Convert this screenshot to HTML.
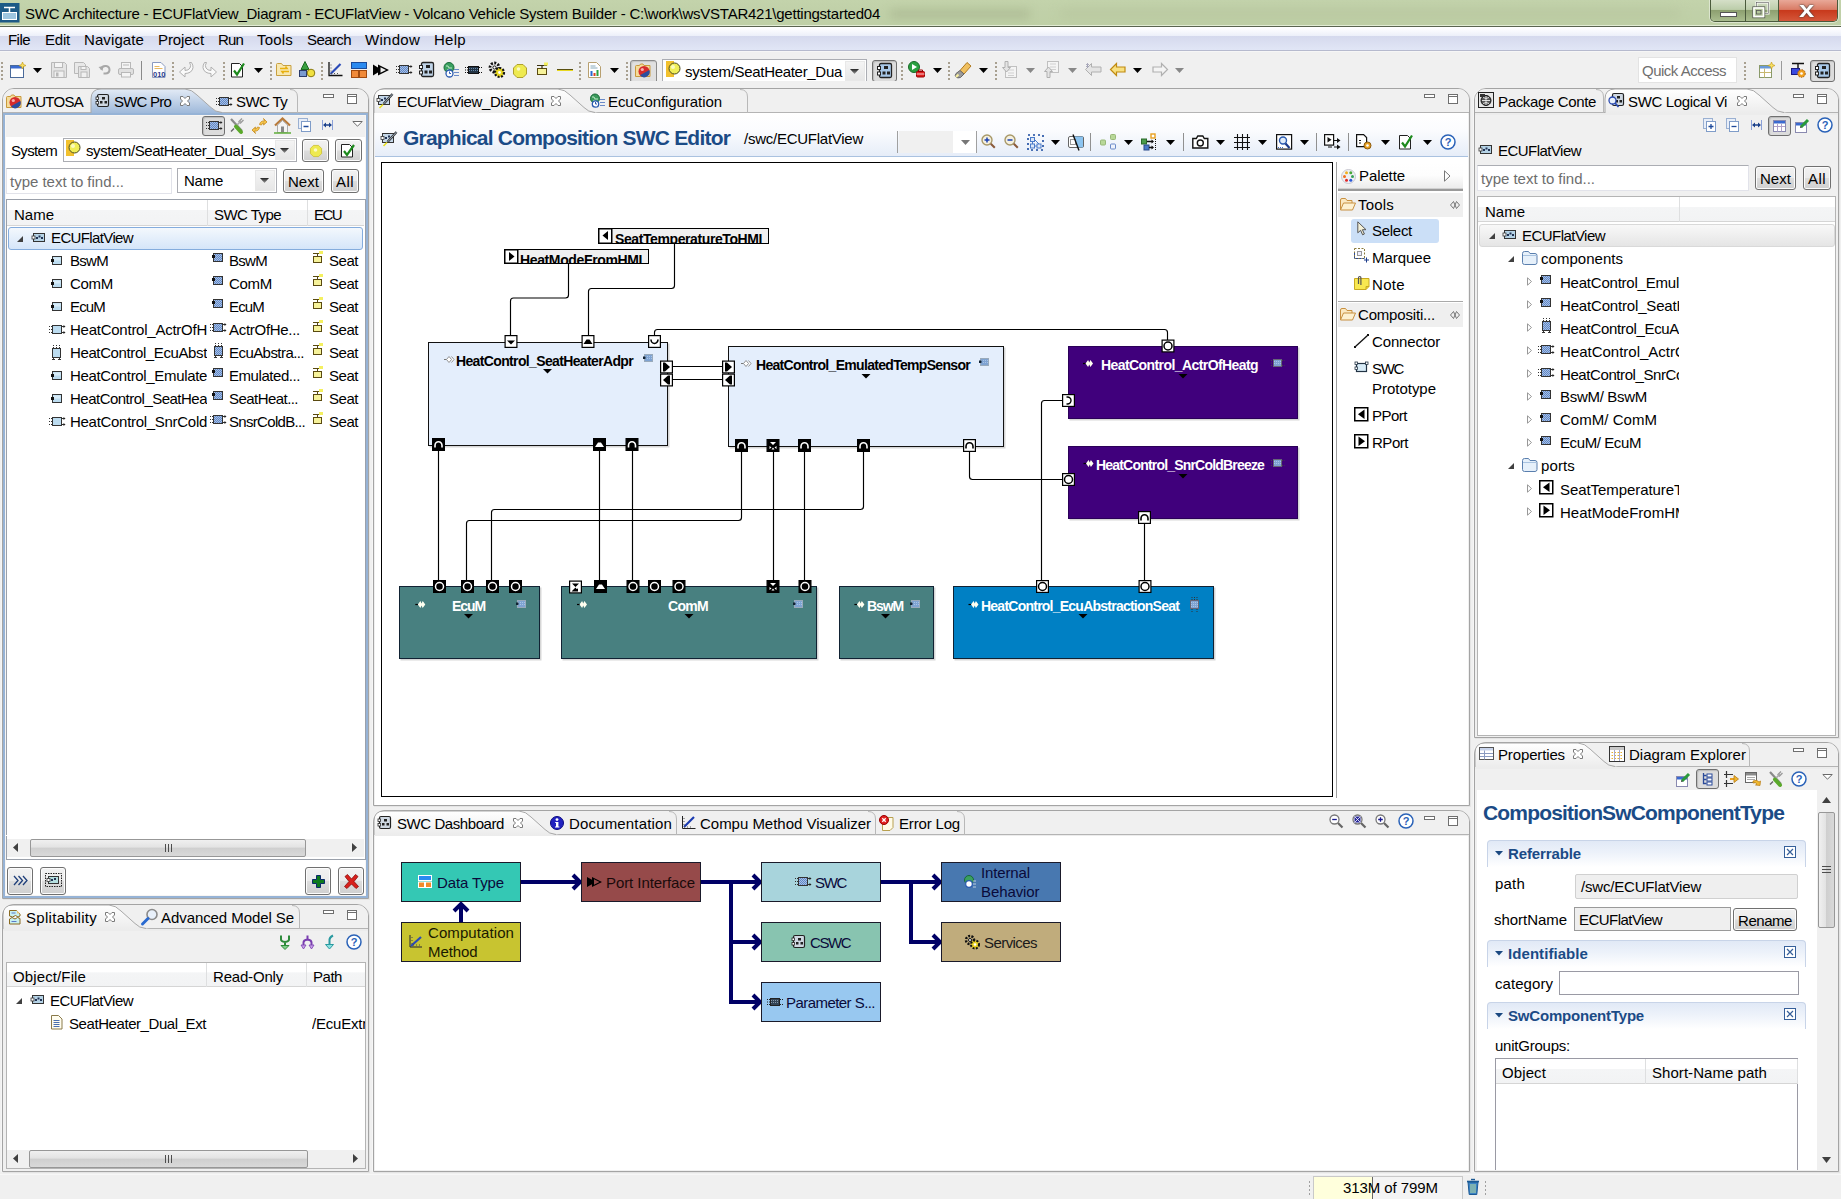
<!DOCTYPE html>
<html><head><meta charset="utf-8"><title>SWC Architecture</title>
<style>
html,body{margin:0;padding:0;}
body{width:1841px;height:1199px;overflow:hidden;position:relative;background:#f0f0f0;font-family:"Liberation Sans",sans-serif;font-size:15px;color:#000;}
.a{position:absolute;box-sizing:border-box;}
.t{position:absolute;white-space:nowrap;}
svg{overflow:visible;}
</style></head><body>
<svg width="0" height="0" style="position:absolute"><defs><pattern id="chk" width="2" height="2" patternUnits="userSpaceOnUse"><rect width="2" height="2" fill="#a8c0e4"/><rect width="1" height="1" fill="#6088c8"/><rect x="1" y="1" width="1" height="1" fill="#6088c8"/></pattern></defs></svg>
<div class="a " style="left:0px;top:0px;width:1841px;height:25px;background:linear-gradient(#c3d3ab,#c0d0a8 50%,#bfd0a6);"></div>
<div class="a" style="left:890px;top:9px;width:140px;height:10px;background:#adbb94;filter:blur(5px);opacity:.8;"></div>
<div class="a" style="left:1060px;top:9px;width:620px;height:9px;background:#b4c29b;filter:blur(6px);opacity:.6;"></div>
<div class="a " style="left:0px;top:25px;width:1841px;height:1px;background:#e2ecd4;"></div>
<div class="a " style="left:0px;top:26px;width:1841px;height:1px;background:#5a6450;"></div>
<svg class="a" style="left:0px;top:3px;" width="20" height="20" viewBox="0 0 20 20"><rect x="0" y="0" width="19.500" height="19.500" fill="#1d5a86"/><rect x="2.5" y="9.5" width="14" height="7" fill="#9ec6e0" stroke="#fff" stroke-width="1"/><path d="M4 4.5h11M9.5 4.5v5" stroke="#fff" stroke-width="1.5"/></svg>
<span class="t" style="left:25px;top:4.0px;font-size:15px;line-height:19px;letter-spacing:-0.240px;">SWC Architecture - ECUFlatView_Diagram - ECUFlatView - Volcano Vehicle System Builder - C:\work\wsVSTAR421\gettingstarted04</span>
<div class="a" style="left:1710px;top:0;width:128px;height:22px;border:1px solid #4a5a3c;border-top:none;border-radius:0 0 5px 5px;overflow:hidden;box-shadow:0 0 0 1px rgba(255,255,255,.45);"><div class="a" style="left:0;top:0;width:35px;height:21px;background:linear-gradient(#d5dfc8,#bccdaa 45%,#8da070 50%,#a9bd8e);border-right:1px solid #4a5a3c;"></div><div class="a" style="left:35px;top:0;width:33px;height:21px;background:linear-gradient(#d5dfc8,#bccdaa 45%,#8da070 50%,#a9bd8e);border-right:1px solid #4a5a3c;"></div><div class="a" style="left:68px;top:0;width:60px;height:21px;background:linear-gradient(#e8a898,#d97c66 45%,#c8391c 50%,#d5573a);"></div></div>
<svg class="a" style="left:1720px;top:12px;" width="18" height="6" viewBox="0 0 18 6"><rect x="0.5" y="0.5" width="16" height="4" fill="#fff" stroke="#555" stroke-width="1"/></svg>
<svg class="a" style="left:1752px;top:2px;" width="18" height="17" viewBox="0 0 18 17"><rect x="4.5" y="0.5" width="12" height="11" fill="none" stroke="#fff" stroke-width="2"/><rect x="4.5" y="0.5" width="12" height="11" fill="none" stroke="#555" stroke-width=".6"/><rect x="0.8" y="4.8" width="12" height="11" fill="#b5c79c" stroke="#555" stroke-width=".8"/><rect x="2" y="6" width="9.5" height="8.5" fill="none" stroke="#fff" stroke-width="1.6"/><rect x="4.5" y="8.5" width="4.5" height="3.5" fill="#b5c79c" stroke="#555" stroke-width=".8"/></svg>
<span class="t" style="left:1799px;top:-3.5px;font-size:22px;line-height:26px;font-weight:bold;color:#fff;text-shadow:0 0 1px #333,0 0 2px #444;transform:scaleX(1.25);transform-origin:0 50%;">x</span>
<div class="a " style="left:0px;top:27px;width:1841px;height:9px;background:linear-gradient(#ffffff,#fdfdff 20%,#eceff9);"></div>
<div class="a " style="left:0px;top:36px;width:1841px;height:14px;background:linear-gradient(#d5d9ed,#e1e6f6);"></div>
<div class="a " style="left:0px;top:50px;width:1841px;height:1px;background:#b6bace;"></div>
<div class="a " style="left:0px;top:51px;width:1841px;height:1px;background:#f6f6f6;"></div>
<span class="t" style="left:8px;top:29.5px;font-size:15px;line-height:19px;letter-spacing:-0.539px;">File</span>
<span class="t" style="left:45px;top:29.5px;font-size:15px;line-height:19px;letter-spacing:-0.211px;">Edit</span>
<span class="t" style="left:84px;top:29.5px;font-size:15px;line-height:19px;letter-spacing:0.100px;">Navigate</span>
<span class="t" style="left:158px;top:29.5px;font-size:15px;line-height:19px;letter-spacing:-0.098px;">Project</span>
<span class="t" style="left:218px;top:29.5px;font-size:15px;line-height:19px;letter-spacing:-0.839px;">Run</span>
<span class="t" style="left:257px;top:29.5px;font-size:15px;line-height:19px;letter-spacing:0.197px;">Tools</span>
<span class="t" style="left:307px;top:29.5px;font-size:15px;line-height:19px;letter-spacing:-0.589px;">Search</span>
<span class="t" style="left:365px;top:29.5px;font-size:15px;line-height:19px;letter-spacing:0.276px;">Window</span>
<span class="t" style="left:434px;top:29.5px;font-size:15px;line-height:19px;letter-spacing:0.289px;">Help</span>
<div class="a " style="left:1638px;top:57px;width:99px;height:26px;background:#fff;border:1px solid #e3e3e3;"></div>
<span class="t" style="left:1642px;top:61.0px;font-size:15px;line-height:19px;letter-spacing:-0.503px;color:#6f6f6f;">Quick Access</span>
<div class="a " style="left:0px;top:1174px;width:1841px;height:1px;background:#f7f7f7;"></div>
<div class="a " style="left:1313px;top:1176px;width:150px;height:23px;background:#f4f4f4;border:1px solid #c9c9c9;border-bottom:none;"></div>
<div class="a " style="left:1314px;top:1177px;width:58px;height:22px;background:#ffffdc;"></div>
<div class="a " style="left:1372px;top:1177px;width:1px;height:22px;background:#666;"></div>
<span class="t" style="left:1343px;top:1177.5px;font-size:15px;line-height:19px;letter-spacing:-0.077px;">313M of 799M</span>
<div class="a " style="left:1309px;top:1181px;width:1px;height:2px;background:#a0a0a0;"></div>
<div class="a " style="left:1309px;top:1185px;width:1px;height:2px;background:#a0a0a0;"></div>
<div class="a " style="left:1309px;top:1189px;width:1px;height:2px;background:#a0a0a0;"></div>
<div class="a " style="left:1309px;top:1193px;width:1px;height:2px;background:#a0a0a0;"></div>
<div class="a " style="left:1485px;top:1181px;width:1px;height:2px;background:#a0a0a0;"></div>
<div class="a " style="left:1485px;top:1185px;width:1px;height:2px;background:#a0a0a0;"></div>
<div class="a " style="left:1485px;top:1189px;width:1px;height:2px;background:#a0a0a0;"></div>
<div class="a " style="left:1485px;top:1193px;width:1px;height:2px;background:#a0a0a0;"></div>
<svg class="a" style="left:1466px;top:1178px;" width="14" height="18" viewBox="0 0 14 18"><path d="M2 4h10l-1.2 12.5h-7.6z" fill="#3b82c4" stroke="#1c5a94" stroke-width="1"/><path d="M1 3.5h12" stroke="#1c5a94" stroke-width="1.6"/><path d="M5 1.5h4" stroke="#1c5a94" stroke-width="1.4"/><path d="M5 6v9M7 6v9M9 6v9" stroke="#bfe0a0" stroke-width="1"/></svg>
<div class="a" style="left:2px;top:88px;width:367px;height:811px;border:1px solid #a4a4a4;border-radius:12px 12px 0 0;background:#f0f0f0;box-shadow:1px 1px 0 #e4e4e4,-1px 0 0 #f6f6f6;"></div>
<div class="a" style="left:3px;top:89px;width:365px;height:24px;border-radius:11px 11px 0 0;background:#f0f0f0;border-bottom:1px solid #b4b4b4;"></div>
<div class="a" style="left:3px;top:113px;width:365px;height:785px;border:2px solid #96b3d6;background:#f0f0f0;box-shadow:inset 0 0 0 1px #f7f5f3;"></div>
<svg class="a" style="left:323px;top:94px;" width="12" height="5" viewBox="0 0 12 5"><rect x="0.5" y="0.5" width="10" height="3" fill="#fff" stroke="#6f6f6f"/></svg>
<svg class="a" style="left:347px;top:94px;" width="12" height="11" viewBox="0 0 12 11"><rect x="0.5" y="0.5" width="9" height="9" fill="#fff" stroke="#6f6f6f"/><path d="M0 2.5h10" stroke="#6f6f6f"/></svg>
<div class="a" style="left:2px;top:904px;width:367px;height:268px;border:1px solid #a4a4a4;border-radius:12px 12px 0 0;background:#f0f0f0;box-shadow:1px 1px 0 #e4e4e4,-1px 0 0 #f6f6f6;"></div>
<div class="a" style="left:3px;top:905px;width:365px;height:24px;border-radius:11px 11px 0 0;background:#f0f0f0;border-bottom:1px solid #b4b4b4;"></div>
<div class="a" style="left:3px;top:929px;width:365px;height:2px;background:#ececec;"></div>
<svg class="a" style="left:323px;top:910px;" width="12" height="5" viewBox="0 0 12 5"><rect x="0.5" y="0.5" width="10" height="3" fill="#fff" stroke="#6f6f6f"/></svg>
<svg class="a" style="left:347px;top:910px;" width="12" height="11" viewBox="0 0 12 11"><rect x="0.5" y="0.5" width="9" height="9" fill="#fff" stroke="#6f6f6f"/><path d="M0 2.5h10" stroke="#6f6f6f"/></svg>
<div class="a" style="left:373px;top:88px;width:1097px;height:718px;border:1px solid #a4a4a4;border-radius:12px 12px 0 0;background:#f0f0f0;box-shadow:1px 1px 0 #e4e4e4,-1px 0 0 #f6f6f6;"></div>
<div class="a" style="left:374px;top:89px;width:1095px;height:24px;border-radius:11px 11px 0 0;background:#f0f0f0;border-bottom:1px solid #b4b4b4;"></div>
<div class="a" style="left:374px;top:113px;width:1095px;height:2px;background:#ececec;"></div>
<svg class="a" style="left:1424px;top:94px;" width="12" height="5" viewBox="0 0 12 5"><rect x="0.5" y="0.5" width="10" height="3" fill="#fff" stroke="#6f6f6f"/></svg>
<svg class="a" style="left:1448px;top:94px;" width="12" height="11" viewBox="0 0 12 11"><rect x="0.5" y="0.5" width="9" height="9" fill="#fff" stroke="#6f6f6f"/><path d="M0 2.5h10" stroke="#6f6f6f"/></svg>
<div class="a" style="left:373px;top:810px;width:1097px;height:362px;border:1px solid #a4a4a4;border-radius:12px 12px 0 0;background:#f0f0f0;box-shadow:1px 1px 0 #e4e4e4,-1px 0 0 #f6f6f6;"></div>
<div class="a" style="left:374px;top:811px;width:1095px;height:24px;border-radius:11px 11px 0 0;background:#f0f0f0;border-bottom:1px solid #b4b4b4;"></div>
<div class="a" style="left:374px;top:835px;width:1095px;height:2px;background:#ececec;"></div>
<svg class="a" style="left:1424px;top:816px;" width="12" height="5" viewBox="0 0 12 5"><rect x="0.5" y="0.5" width="10" height="3" fill="#fff" stroke="#6f6f6f"/></svg>
<svg class="a" style="left:1448px;top:816px;" width="12" height="11" viewBox="0 0 12 11"><rect x="0.5" y="0.5" width="9" height="9" fill="#fff" stroke="#6f6f6f"/><path d="M0 2.5h10" stroke="#6f6f6f"/></svg>
<div class="a" style="left:1474px;top:88px;width:365px;height:650px;border:1px solid #a4a4a4;border-radius:12px 12px 0 0;background:#f0f0f0;box-shadow:1px 1px 0 #e4e4e4,-1px 0 0 #f6f6f6;"></div>
<div class="a" style="left:1475px;top:89px;width:363px;height:24px;border-radius:11px 11px 0 0;background:#f0f0f0;border-bottom:1px solid #b4b4b4;"></div>
<div class="a" style="left:1475px;top:113px;width:363px;height:2px;background:#ececec;"></div>
<svg class="a" style="left:1793px;top:94px;" width="12" height="5" viewBox="0 0 12 5"><rect x="0.5" y="0.5" width="10" height="3" fill="#fff" stroke="#6f6f6f"/></svg>
<svg class="a" style="left:1817px;top:94px;" width="12" height="11" viewBox="0 0 12 11"><rect x="0.5" y="0.5" width="9" height="9" fill="#fff" stroke="#6f6f6f"/><path d="M0 2.5h10" stroke="#6f6f6f"/></svg>
<div class="a" style="left:1474px;top:742px;width:365px;height:430px;border:1px solid #a4a4a4;border-radius:12px 12px 0 0;background:#f0f0f0;box-shadow:1px 1px 0 #e4e4e4,-1px 0 0 #f6f6f6;"></div>
<div class="a" style="left:1475px;top:743px;width:363px;height:24px;border-radius:11px 11px 0 0;background:#f0f0f0;border-bottom:1px solid #b4b4b4;"></div>
<div class="a" style="left:1475px;top:767px;width:363px;height:2px;background:#ececec;"></div>
<svg class="a" style="left:1793px;top:748px;" width="12" height="5" viewBox="0 0 12 5"><rect x="0.5" y="0.5" width="10" height="3" fill="#fff" stroke="#6f6f6f"/></svg>
<svg class="a" style="left:1817px;top:748px;" width="12" height="11" viewBox="0 0 12 11"><rect x="0.5" y="0.5" width="9" height="9" fill="#fff" stroke="#6f6f6f"/><path d="M0 2.5h10" stroke="#6f6f6f"/></svg>
<svg class="a" style="left:91px;top:89px;" width="136" height="25" viewBox="0 0 136 25"><defs><linearGradient id="gb" x1="0" y1="0" x2="0" y2="1"><stop offset="0" stop-color="#e3ebf6"/><stop offset="1" stop-color="#9fb9da"/></linearGradient></defs><path d="M0 24 L0 10 Q0 0 10 0 L94 0 Q101 0.500 106 6 L120 18.5 Q124 23 131 23.5 L134 24 Z" fill="url(#gb)"/><path d="M0 24 L0 10 Q0 0 10 0 L94 0 Q101 0.500 106 6 L120 18.5 Q124 23 131 23.5" fill="none" stroke="#a8a8a8" stroke-width="1"/></svg>
<svg class="a" style="left:6px;top:94px;" width="17" height="15" viewBox="0 0 17 15"><path d="M0.5 3.500q0-1 1-1h3l1-1.500h2.500l1 1.500h6v11h-14.500z" fill="#f5dc9a" stroke="#c8993c"/><circle cx="9" cy="8.500" r="5.500" fill="#d62c2c"/><path d="M5 12.300a5.500 5.500 0 0 0 9.400-5.300z" fill="#2b4f9e"/><circle cx="7.300" cy="6.500" r="1.600" fill="#f6b0b0"/></svg>
<span class="t" style="left:26px;top:92.0px;font-size:15px;line-height:19px;letter-spacing:-0.732px;">AUTOSA</span>
<svg class="a" style="left:96px;top:94px;" width="14" height="14" viewBox="0 0 14 14"><rect x="1.500" y="0.500" width="11" height="12" rx="1.500" fill="#cfd8e2" stroke="#222" stroke-width="1.200"/><rect x="0" y="3" width="2.500" height="2.500" fill="#fff" stroke="#222" stroke-width=".8"/><rect x="0" y="7.500" width="2.500" height="2.500" fill="#fff" stroke="#222" stroke-width=".8"/><rect x="6" y="3" width="3" height="2.500" fill="#222"/><rect x="4" y="7" width="2.500" height="2.500" fill="#222"/><rect x="8.500" y="7" width="2.500" height="2.500" fill="#222"/></svg>
<span class="t" style="left:114px;top:92.0px;font-size:15px;line-height:19px;letter-spacing:-0.786px;">SWC Pro</span>
<svg class="a" style="left:180px;top:96px;" width="10" height="10" viewBox="0 0 10 10"><path d="M0.5 0.5h2.500l2 2 2-2h2.500v2.500l-2 2 2 2v2.500h-2.500l-2-2-2 2h-2.500v-2.500l2-2-2-2z" fill="#fff" stroke="#7a7a7a" stroke-width="1"/></svg>
<svg class="a" style="left:216px;top:97px;" width="17" height="10" viewBox="0 0 17 10"><rect x="3.5" y="0.5" width="9" height="8" fill="url(#chk)" stroke="#333"/><path d="M0 1.5h3M0 4.5h3M0 7.5h3" stroke="#333" stroke-dasharray="1 1"/><path d="M13 1.5h2M13 7.5h2" stroke="#333"/><path d="M14.5 0v3l2-1.5zM14.5 6v3l2-1.5z" fill="#222"/></svg>
<span class="t" style="left:236px;top:92.0px;font-size:15px;line-height:19px;letter-spacing:-0.620px;">SWC Ty</span>
<svg class="a" style="left:290px;top:89px;" width="10" height="25" viewBox="0 0 10 25"><path d="M0 0.500Q7.500 0.500 7.500 8L7.500 24" fill="none" stroke="#b8b8b8"/></svg>
<div class="a " style="left:6px;top:137px;width:359px;height:758px;background:#fff;"></div>
<div class="a" style="left:202px;top:116px;width:23px;height:20px;border:1px solid #6f6f6f;border-radius:3px;background:#dcdcdc;box-shadow:inset 1px 1px 1px #bbb;"></div>
<svg class="a" style="left:206px;top:121px;" width="17" height="10" viewBox="0 0 17 10"><rect x="3.5" y="0.5" width="9" height="8" fill="url(#chk)" stroke="#333"/><path d="M0 1.5h3M0 4.5h3M0 7.5h3" stroke="#333" stroke-dasharray="1 1"/><path d="M13 1.5h2M13 7.5h2" stroke="#333"/><path d="M14.5 0v3l2-1.5zM14.5 6v3l2-1.5z" fill="#222"/></svg>
<svg class="a" style="left:229px;top:117px;" width="16" height="17" viewBox="0 0 16 17"><path d="M2 2l11 12" stroke="#8a8a8a" stroke-width="2.200"/><path d="M13 1.500l-3 3 1.500 1.500 3-3" fill="none" stroke="#999" stroke-width="1.300"/><path d="M12 4l-6 6" stroke="#aaa" stroke-width="1.600"/><path d="M7 9.500l5 5.500" stroke="#5aa92a" stroke-width="4" stroke-linecap="round"/><path d="M2 14.500l3-3" stroke="#666" stroke-width="1.500"/></svg>
<svg class="a" style="left:252px;top:118px;" width="15" height="16" viewBox="0 0 15 16"><path d="M7.500 6.500q1-4 5-3.500l-1-2.500 3.500 3.500-3.500 3 .5-2q-2 0-2.500 2z" fill="#f7c64c" stroke="#c58a1a" stroke-width=".8"/><path d="M7.500 9.500q-1 4-5 3.500l1 2.500-3.500-3.500 3.500-3-.5 2q2 0 2.500-2z" fill="#f7c64c" stroke="#c58a1a" stroke-width=".8"/></svg>
<svg class="a" style="left:274px;top:117px;" width="17" height="17" viewBox="0 0 17 17"><path d="M1 8.500l7.500-7 7.500 7" fill="none" stroke="#b87a3a" stroke-width="2.200"/><path d="M3.500 8v7.500h10v-7.500l-5-4.500z" fill="#f4f4f4" stroke="#999" stroke-width=".8"/><rect x="7" y="9.500" width="3" height="6" fill="#888"/><path d="M0 16h17" stroke="#5fae3a" stroke-width="1.500"/></svg>
<svg class="a" style="left:298px;top:118px;" width="14" height="15" viewBox="0 0 14 15"><rect x="0.500" y="0.500" width="9" height="10" fill="#e8eef8" stroke="#9ab0d2"/><rect x="3.500" y="3.500" width="9" height="10" fill="#fff" stroke="#7f9cc8"/><path d="M5.500 8.500h5" stroke="#1f4a9a" stroke-width="1.500"/></svg>
<svg class="a" style="left:322px;top:120px;" width="11" height="10" viewBox="0 0 11 10"><path d="M0.500 0v10M10.500 0v10" stroke="#8aa0d8"/><path d="M2 5h7" stroke="#1a3f8a" stroke-width="1.500"/><path d="M4 2.500l-3 2.500 3 2.500zM7 2.500l3 2.500-3 2.500z" fill="#1a3f8a"/></svg>
<svg class="a" style="left:352px;top:121px;" width="11" height="6" viewBox="0 0 11 6"><path d="M0.800 0.500h9.400l-4.700 4.700z" fill="#fff" stroke="#6a6a6a"/></svg>
<span class="t" style="left:11px;top:141.0px;font-size:15px;line-height:19px;letter-spacing:-0.669px;">System</span>
<div class="a" style="left:63px;top:138px;width:234px;height:24px;border:1px solid #abadb3;background:#fff;"></div>
<div class="a" style="left:275px;top:140px;width:20px;height:20px;border:1px solid #e8e8e8;background:linear-gradient(#f4f4f4,#e6e6e6);"></div>
<svg class="a" style="left:280px;top:148px;" width="9" height="5"><defs><linearGradient id="dg3" x1="0" y1="0" x2="0" y2="1"><stop offset="0" stop-color="#222"/><stop offset="1" stop-color="#999"/></linearGradient></defs><path d="M0 0h9l-4.500 5z" fill="url(#dg3)"/></svg>
<div class="a " style="left:66px;top:140px;width:8px;height:16px;background:#f2c12e;"></div>
<svg class="a" style="left:68px;top:141px;" width="13" height="13" viewBox="0 0 13 13"><circle cx="6.500" cy="6.500" r="5.500" fill="#f0ee58" stroke="#4a4a20"/><circle cx="5" cy="5" r="2" fill="#fbfbc0"/></svg>
<span class="t" style="left:86px;top:141.0px;font-size:15px;line-height:19px;letter-spacing:-0.427px;">system/SeatHeater_Dual_Sys</span>
<div class="a" style="left:302px;top:139px;width:27px;height:23px;border:1px solid #707070;border-radius:3px;background:linear-gradient(#f2f2f2,#ebebeb 48%,#dddddd 52%,#cfcfcf);box-shadow:inset 0 0 0 1px #fcfcfc;"></div>
<svg class="a" style="left:310px;top:145px;" width="12" height="12" viewBox="0 0 12 12"><path transform="scale(.857)" d="M4 0.500h6l3.500 3.500v6l-3.500 3.500h-6l-3.500-3.500v-6z" fill="#eeea50" stroke="#c8b820" stroke-width=".8"/><circle cx="5.500" cy="5" r="1.800" fill="#fafac8"/></svg>
<div class="a" style="left:335px;top:139px;width:27px;height:23px;border:1px solid #707070;border-radius:3px;background:linear-gradient(#f2f2f2,#ebebeb 48%,#dddddd 52%,#cfcfcf);box-shadow:inset 0 0 0 1px #fcfcfc;"></div>
<svg class="a" style="left:341px;top:143px;" width="15" height="15" viewBox="0 0 15 15"><path d="M0.500 1.500h8l3 3v9.500h-11z" fill="#fff" stroke="#222"/><path d="M3 8l3 4 7-10" fill="none" stroke="#1d8a1d" stroke-width="2.200"/></svg>
<div class="a " style="left:6px;top:168px;width:166px;height:26px;background:#fff;border:1px solid #e2e3ea;border-top-color:#abadb3;"></div>
<span class="t" style="left:10px;top:172.0px;font-size:15px;line-height:19px;letter-spacing:-0.014px;color:#6d6d6d;">type text to find...</span>
<div class="a" style="left:177px;top:168px;width:100px;height:25px;border:1px solid #abadb3;background:#fff;"></div>
<div class="a" style="left:255px;top:170px;width:20px;height:21px;border:1px solid #e8e8e8;background:linear-gradient(#f4f4f4,#e6e6e6);"></div>
<svg class="a" style="left:260px;top:178px;" width="9" height="5"><defs><linearGradient id="dg4" x1="0" y1="0" x2="0" y2="1"><stop offset="0" stop-color="#222"/><stop offset="1" stop-color="#999"/></linearGradient></defs><path d="M0 0h9l-4.500 5z" fill="url(#dg4)"/></svg>
<span class="t" style="left:184px;top:171.0px;font-size:15px;line-height:19px;letter-spacing:-0.254px;">Name</span>
<div class="a" style="left:283px;top:169px;width:41px;height:24px;border:1px solid #707070;border-radius:3px;background:linear-gradient(#f2f2f2,#ebebeb 48%,#dddddd 52%,#cfcfcf);box-shadow:inset 0 0 0 1px #fcfcfc;"></div>
<span class="t" style="left:288.0px;top:172.0px;font-size:15px;line-height:19px;letter-spacing:0.039px;">Next</span>
<div class="a" style="left:331px;top:169px;width:28px;height:24px;border:1px solid #707070;border-radius:3px;background:linear-gradient(#f2f2f2,#ebebeb 48%,#dddddd 52%,#cfcfcf);box-shadow:inset 0 0 0 1px #fcfcfc;"></div>
<span class="t" style="left:336.0px;top:172.0px;font-size:15px;line-height:19px;letter-spacing:0.448px;">All</span>
<div class="a " style="left:6px;top:199px;width:360px;height:661px;background:#fff;border:1px solid #9aa0aa;"></div>
<div class="a" style="left:7px;top:200px;width:357px;height:26px;background:linear-gradient(#fff,#fff 40%,#f4f5f6 42%,#f2f3f4);border-bottom:1px solid #d5d5d5;"></div>
<div class="a" style="left:207px;top:200px;width:1px;height:26px;background:#dedfe0;"></div>
<div class="a" style="left:307px;top:200px;width:1px;height:26px;background:#dedfe0;"></div>
<span class="t" style="left:14px;top:205.0px;font-size:15px;line-height:19px;letter-spacing:-0.004px;">Name</span>
<span class="t" style="left:214px;top:205.0px;font-size:15px;line-height:19px;letter-spacing:-0.551px;">SWC Type</span>
<span class="t" style="left:314px;top:205.0px;font-size:15px;line-height:19px;letter-spacing:-1.552px;">ECU</span>
<div class="a" style="left:8px;top:227px;width:355px;height:23px;border:1px solid #84acdd;border-radius:3px;background:linear-gradient(#f3f8fd,#d5e5f9);"></div>
<svg class="a" style="left:16px;top:235px;" width="8" height="8" viewBox="0 0 8 8"><path d="M7 1v6H1z" fill="#404040"/></svg>
<svg class="a" style="left:32px;top:233px;" width="14" height="10" viewBox="0 0 14 10"><rect x="1.5" y="0.5" width="11" height="8" fill="#b5d3e6" stroke="#333"/><rect x="0" y="3" width="3" height="3" fill="#fff" stroke="#333" stroke-width=".8"/><rect x="4" y="4" width="2" height="2" fill="#235"/><rect x="6.5" y="2.5" width="2" height="2" fill="#235"/><rect x="9" y="4" width="2" height="2" fill="#235"/></svg>
<span class="t" style="left:51px;top:228.0px;font-size:15px;line-height:19px;letter-spacing:-0.626px;">ECUFlatView</span>
<svg class="a" style="left:51px;top:256px;" width="13" height="10" viewBox="0 0 13 10"><rect x="1.5" y="0.5" width="9" height="8" fill="#bcdcf0" stroke="#333"/><rect x="2.5" y="1.5" width="7" height="3" fill="#d8ecf8"/><rect x="0" y="3" width="3" height="3" fill="#111"/></svg>
<span class="t" style="left:70px;top:251.0px;font-size:15px;line-height:19px;letter-spacing:-0.707px;">BswM</span>
<div class="a " style="left:207px;top:250px;width:7px;height:22px;background:#fff;"></div>
<svg class="a" style="left:212px;top:253px;" width="13" height="10" viewBox="0 0 13 10"><rect x="1.5" y="0.5" width="9" height="8" fill="url(#chk)" stroke="#333"/><rect x="0" y="2" width="3" height="3" fill="#111"/></svg>
<span class="t" style="left:229px;top:251.0px;font-size:15px;line-height:19px;letter-spacing:-0.707px;">BswM</span>
<svg class="a" style="left:312px;top:251px;" width="12" height="14" viewBox="0 0 12 14"><rect x="1.5" y="5.5" width="8" height="6" fill="#f6f29a" stroke="#5a4a10"/><path d="M1 2.5h9M5.5 2.5v3" stroke="#5a4a10"/><rect x="7" y="0" width="4" height="3" fill="#f4f060"/></svg>
<span class="t" style="left:329px;top:251.0px;font-size:15px;line-height:19px;letter-spacing:-0.465px;">Seat</span>
<svg class="a" style="left:51px;top:279px;" width="13" height="10" viewBox="0 0 13 10"><rect x="1.5" y="0.5" width="9" height="8" fill="#bcdcf0" stroke="#333"/><rect x="2.5" y="1.5" width="7" height="3" fill="#d8ecf8"/><rect x="0" y="3" width="3" height="3" fill="#111"/></svg>
<span class="t" style="left:70px;top:274.0px;font-size:15px;line-height:19px;letter-spacing:-0.293px;">ComM</span>
<div class="a " style="left:207px;top:273px;width:7px;height:22px;background:#fff;"></div>
<svg class="a" style="left:212px;top:276px;" width="13" height="10" viewBox="0 0 13 10"><rect x="1.5" y="0.5" width="9" height="8" fill="url(#chk)" stroke="#333"/><rect x="0" y="2" width="3" height="3" fill="#111"/></svg>
<span class="t" style="left:229px;top:274.0px;font-size:15px;line-height:19px;letter-spacing:-0.293px;">ComM</span>
<svg class="a" style="left:312px;top:274px;" width="12" height="14" viewBox="0 0 12 14"><rect x="1.5" y="5.5" width="8" height="6" fill="#f6f29a" stroke="#5a4a10"/><path d="M1 2.5h9M5.5 2.5v3" stroke="#5a4a10"/><rect x="7" y="0" width="4" height="3" fill="#f4f060"/></svg>
<span class="t" style="left:329px;top:274.0px;font-size:15px;line-height:19px;letter-spacing:-0.465px;">Seat</span>
<svg class="a" style="left:51px;top:302px;" width="13" height="10" viewBox="0 0 13 10"><rect x="1.5" y="0.5" width="9" height="8" fill="#bcdcf0" stroke="#333"/><rect x="2.5" y="1.5" width="7" height="3" fill="#d8ecf8"/><rect x="0" y="3" width="3" height="3" fill="#111"/></svg>
<span class="t" style="left:70px;top:297.0px;font-size:15px;line-height:19px;letter-spacing:-0.836px;">EcuM</span>
<div class="a " style="left:207px;top:296px;width:7px;height:22px;background:#fff;"></div>
<svg class="a" style="left:212px;top:299px;" width="13" height="10" viewBox="0 0 13 10"><rect x="1.5" y="0.5" width="9" height="8" fill="url(#chk)" stroke="#333"/><rect x="0" y="2" width="3" height="3" fill="#111"/></svg>
<span class="t" style="left:229px;top:297.0px;font-size:15px;line-height:19px;letter-spacing:-0.836px;">EcuM</span>
<svg class="a" style="left:312px;top:297px;" width="12" height="14" viewBox="0 0 12 14"><rect x="1.5" y="5.5" width="8" height="6" fill="#f6f29a" stroke="#5a4a10"/><path d="M1 2.5h9M5.5 2.5v3" stroke="#5a4a10"/><rect x="7" y="0" width="4" height="3" fill="#f4f060"/></svg>
<span class="t" style="left:329px;top:297.0px;font-size:15px;line-height:19px;letter-spacing:-0.465px;">Seat</span>
<svg class="a" style="left:49px;top:325px;" width="17" height="10" viewBox="0 0 17 10"><rect x="3.5" y="0.5" width="9" height="8" fill="#bcdcf0" stroke="#333"/><path d="M0 1.5h3M0 4.5h3M0 7.5h3" stroke="#333" stroke-dasharray="1 1"/><path d="M13 1.5h2M13 7.5h2" stroke="#333"/><path d="M14.5 0v3l2-1.5zM14.5 6v3l2-1.5z" fill="#222"/></svg>
<span class="t" style="left:70px;top:320.0px;font-size:15px;line-height:19px;letter-spacing:-0.249px;">HeatControl_ActrOfH</span>
<div class="a " style="left:207px;top:319px;width:7px;height:22px;background:#fff;"></div>
<svg class="a" style="left:210px;top:323px;" width="17" height="10" viewBox="0 0 17 10"><rect x="3.5" y="0.5" width="9" height="8" fill="url(#chk)" stroke="#333"/><path d="M0 1.5h3M0 4.5h3M0 7.5h3" stroke="#333" stroke-dasharray="1 1"/><path d="M13 1.5h2M13 7.5h2" stroke="#333"/><path d="M14.5 0v3l2-1.5zM14.5 6v3l2-1.5z" fill="#222"/></svg>
<span class="t" style="left:229px;top:320.0px;font-size:15px;line-height:19px;letter-spacing:-0.291px;">ActrOfHe...</span>
<svg class="a" style="left:312px;top:320px;" width="12" height="14" viewBox="0 0 12 14"><rect x="1.5" y="5.5" width="8" height="6" fill="#f6f29a" stroke="#5a4a10"/><path d="M1 2.5h9M5.5 2.5v3" stroke="#5a4a10"/><rect x="7" y="0" width="4" height="3" fill="#f4f060"/></svg>
<span class="t" style="left:329px;top:320.0px;font-size:15px;line-height:19px;letter-spacing:-0.465px;">Seat</span>
<svg class="a" style="left:51px;top:345px;" width="12" height="16" viewBox="0 0 12 16"><rect x="1.5" y="3.5" width="8" height="9" fill="#bcdcf0" stroke="#333"/><path d="M2.5 0v3M5.5 0v3M8.5 0v3" stroke="#333" stroke-dasharray="1 1"/><path d="M2.5 13v2M8.5 13v2" stroke="#333"/><path d="M1 14.5h3M7 14.5h3" stroke="#333"/></svg>
<span class="t" style="left:70px;top:343.0px;font-size:15px;line-height:19px;letter-spacing:-0.382px;">HeatControl_EcuAbst</span>
<div class="a " style="left:207px;top:342px;width:7px;height:22px;background:#fff;"></div>
<svg class="a" style="left:213px;top:343px;" width="12" height="16" viewBox="0 0 12 16"><rect x="1.5" y="3.5" width="8" height="9" fill="url(#chk)" stroke="#333"/><path d="M2.5 0v3M5.5 0v3M8.5 0v3" stroke="#333" stroke-dasharray="1 1"/><path d="M2.5 13v2M8.5 13v2" stroke="#333"/><path d="M1 14.5h3M7 14.5h3" stroke="#333"/></svg>
<span class="t" style="left:229px;top:343.0px;font-size:15px;line-height:19px;letter-spacing:-0.560px;">EcuAbstra...</span>
<svg class="a" style="left:312px;top:343px;" width="12" height="14" viewBox="0 0 12 14"><rect x="1.5" y="5.5" width="8" height="6" fill="#f6f29a" stroke="#5a4a10"/><path d="M1 2.5h9M5.5 2.5v3" stroke="#5a4a10"/><rect x="7" y="0" width="4" height="3" fill="#f4f060"/></svg>
<span class="t" style="left:329px;top:343.0px;font-size:15px;line-height:19px;letter-spacing:-0.465px;">Seat</span>
<svg class="a" style="left:51px;top:371px;" width="13" height="10" viewBox="0 0 13 10"><rect x="1.5" y="0.5" width="9" height="8" fill="#bcdcf0" stroke="#333"/><rect x="2.5" y="1.5" width="7" height="3" fill="#d8ecf8"/><rect x="0" y="3" width="3" height="3" fill="#111"/></svg>
<span class="t" style="left:70px;top:366.0px;font-size:15px;line-height:19px;letter-spacing:-0.338px;">HeatControl_Emulate</span>
<div class="a " style="left:207px;top:365px;width:7px;height:22px;background:#fff;"></div>
<svg class="a" style="left:212px;top:368px;" width="13" height="10" viewBox="0 0 13 10"><rect x="1.5" y="0.5" width="9" height="8" fill="url(#chk)" stroke="#333"/><rect x="0" y="2" width="3" height="3" fill="#111"/></svg>
<span class="t" style="left:229px;top:366.0px;font-size:15px;line-height:19px;letter-spacing:-0.445px;">Emulated...</span>
<svg class="a" style="left:312px;top:366px;" width="12" height="14" viewBox="0 0 12 14"><rect x="1.5" y="5.5" width="8" height="6" fill="#f6f29a" stroke="#5a4a10"/><path d="M1 2.5h9M5.5 2.5v3" stroke="#5a4a10"/><rect x="7" y="0" width="4" height="3" fill="#f4f060"/></svg>
<span class="t" style="left:329px;top:366.0px;font-size:15px;line-height:19px;letter-spacing:-0.465px;">Seat</span>
<svg class="a" style="left:51px;top:394px;" width="13" height="10" viewBox="0 0 13 10"><rect x="1.5" y="0.5" width="9" height="8" fill="#bcdcf0" stroke="#333"/><rect x="2.5" y="1.5" width="7" height="3" fill="#d8ecf8"/><rect x="0" y="3" width="3" height="3" fill="#111"/></svg>
<span class="t" style="left:70px;top:389.0px;font-size:15px;line-height:19px;letter-spacing:-0.514px;">HeatControl_SeatHea</span>
<div class="a " style="left:207px;top:388px;width:7px;height:22px;background:#fff;"></div>
<svg class="a" style="left:212px;top:391px;" width="13" height="10" viewBox="0 0 13 10"><rect x="1.5" y="0.5" width="9" height="8" fill="url(#chk)" stroke="#333"/><rect x="0" y="2" width="3" height="3" fill="#111"/></svg>
<span class="t" style="left:229px;top:389.0px;font-size:15px;line-height:19px;letter-spacing:-0.551px;">SeatHeat...</span>
<svg class="a" style="left:312px;top:389px;" width="12" height="14" viewBox="0 0 12 14"><rect x="1.5" y="5.5" width="8" height="6" fill="#f6f29a" stroke="#5a4a10"/><path d="M1 2.5h9M5.5 2.5v3" stroke="#5a4a10"/><rect x="7" y="0" width="4" height="3" fill="#f4f060"/></svg>
<span class="t" style="left:329px;top:389.0px;font-size:15px;line-height:19px;letter-spacing:-0.465px;">Seat</span>
<svg class="a" style="left:49px;top:417px;" width="17" height="10" viewBox="0 0 17 10"><rect x="3.5" y="0.5" width="9" height="8" fill="#bcdcf0" stroke="#333"/><path d="M0 1.5h3M0 4.5h3M0 7.5h3" stroke="#333" stroke-dasharray="1 1"/><path d="M13 1.5h2M13 7.5h2" stroke="#333"/><path d="M14.5 0v3l2-1.5zM14.5 6v3l2-1.5z" fill="#222"/></svg>
<span class="t" style="left:70px;top:412.0px;font-size:15px;line-height:19px;letter-spacing:-0.294px;">HeatControl_SnrCold</span>
<div class="a " style="left:207px;top:411px;width:7px;height:22px;background:#fff;"></div>
<svg class="a" style="left:210px;top:415px;" width="17" height="10" viewBox="0 0 17 10"><rect x="3.5" y="0.5" width="9" height="8" fill="url(#chk)" stroke="#333"/><path d="M0 1.5h3M0 4.5h3M0 7.5h3" stroke="#333" stroke-dasharray="1 1"/><path d="M13 1.5h2M13 7.5h2" stroke="#333"/><path d="M14.5 0v3l2-1.5zM14.5 6v3l2-1.5z" fill="#222"/></svg>
<span class="t" style="left:229px;top:412.0px;font-size:15px;line-height:19px;letter-spacing:-0.684px;">SnsrColdB...</span>
<svg class="a" style="left:312px;top:412px;" width="12" height="14" viewBox="0 0 12 14"><rect x="1.5" y="5.5" width="8" height="6" fill="#f6f29a" stroke="#5a4a10"/><path d="M1 2.5h9M5.5 2.5v3" stroke="#5a4a10"/><rect x="7" y="0" width="4" height="3" fill="#f4f060"/></svg>
<span class="t" style="left:329px;top:412.0px;font-size:15px;line-height:19px;letter-spacing:-0.465px;">Seat</span>
<div class="a " style="left:6px;top:835px;width:359px;height:1px;background:#fff;"></div>
<div class="a" style="left:7px;top:839px;width:357px;height:18px;background:#f0f0f0;"></div>
<div class="a" style="left:30px;top:839px;width:276px;height:18px;border:1px solid #979797;border-radius:2px;background:linear-gradient(#f0f0f0,#e3e3e3 45%,#cfcfcf 50%,#d9d9d9);"></div>
<div class="a" style="left:165px;top:844px;width:1px;height:8px;background:#4d4d4d;"></div>
<div class="a" style="left:168px;top:844px;width:1px;height:8px;background:#4d4d4d;"></div>
<div class="a" style="left:171px;top:844px;width:1px;height:8px;background:#4d4d4d;"></div>
<svg class="a" style="left:13px;top:843px;" width="6" height="9"><path d="M5 0v9l-5-4.500z" fill="#404040"/></svg>
<svg class="a" style="left:352px;top:843px;" width="6" height="9"><path d="M0 0v9l5-4.500z" fill="#404040"/></svg>
<div class="a" style="left:7px;top:867px;width:26px;height:28px;border:1px solid #707070;border-radius:3px;background:linear-gradient(#f2f2f2,#ebebeb 48%,#dddddd 52%,#cfcfcf);box-shadow:inset 0 0 0 1px #fcfcfc;"></div>
<svg class="a" style="left:13px;top:875px;" width="15" height="11" viewBox="0 0 15 11"><path d="M1 1l4 4.500-4 4.500M5.500 1l4 4.500-4 4.500M10 1l4 4.500-4 4.500" fill="none" stroke="#1f3f7a" stroke-width="1.300"/></svg>
<div class="a" style="left:40px;top:867px;width:26px;height:28px;border:1px solid #707070;border-radius:3px;background:linear-gradient(#f2f2f2,#ebebeb 48%,#dddddd 52%,#cfcfcf);box-shadow:inset 0 0 0 1px #fcfcfc;"></div>
<svg class="a" style="left:45px;top:873px;" width="17" height="15" viewBox="0 0 17 15"><rect x="0.500" y="0.500" width="16" height="13" fill="none" stroke="#222" stroke-dasharray="1.500 1"/><rect x="3.500" y="3.500" width="10" height="7" fill="#b5dfe0" stroke="#333"/><rect x="2" y="5.500" width="3" height="3" fill="#fff" stroke="#333" stroke-width=".8"/><rect x="6" y="6" width="2" height="2" fill="#235"/><rect x="9" y="5" width="2" height="2" fill="#235"/></svg>
<div class="a" style="left:305px;top:867px;width:26px;height:28px;border:1px solid #707070;border-radius:3px;background:linear-gradient(#f2f2f2,#ebebeb 48%,#dddddd 52%,#cfcfcf);box-shadow:inset 0 0 0 1px #fcfcfc;"></div>
<svg class="a" style="left:312px;top:875px;" width="13" height="13" viewBox="0 0 13 13"><path d="M4.500 0.500h4v4h4v4h-4v4h-4v-4h-4v-4h4z" fill="#0c7a1c" stroke="#0a2a6a" stroke-width="1"/></svg>
<div class="a" style="left:338px;top:867px;width:26px;height:28px;border:1px solid #707070;border-radius:3px;background:linear-gradient(#f2f2f2,#ebebeb 48%,#dddddd 52%,#cfcfcf);box-shadow:inset 0 0 0 1px #fcfcfc;"></div>
<svg class="a" style="left:344px;top:874px;" width="15" height="15" viewBox="0 0 15 15"><path d="M1 2.500l2.500-2 4 4.500 4-4.500 2.500 2-4 5 4.500 5-2.500 2-4.500-4.500-4.500 4.500-2.500-2 4.500-5z" fill="#d8201c" stroke="#8a0c0c" stroke-width=".8"/></svg>
<svg class="a" style="left:3px;top:905px;" width="148" height="25" viewBox="0 0 148 25"><defs><linearGradient id="gw" x1="0" y1="0" x2="0" y2="1"><stop offset="0" stop-color="#ffffff"/><stop offset="1" stop-color="#ececec"/></linearGradient></defs><path d="M0 24 L0 10 Q0 0 10 0 L106 0 Q113 0.500 118 6 L132 18.5 Q136 23 143 23.5 L146 24 Z" fill="url(#gw)"/><path d="M0 24 L0 10 Q0 0 10 0 L106 0 Q113 0.500 118 6 L132 18.5 Q136 23 143 23.5" fill="none" stroke="#a8a8a8" stroke-width="1"/></svg>
<svg class="a" style="left:9px;top:910px;" width="12" height="15" viewBox="0 0 12 15"><path d="M0.500 6V0.500h7l3.500 3.500v2l-2 1-2.500-1.500-3 1.500z" fill="#c8f0f0" stroke="#8a6a20"/><path d="M8 0.500v3h3z" fill="#e8c880"/><path d="M0.500 9l2.500-1.500 3 1.500 2.500-1.500 2.500 1v5.500h-10.500z" fill="#c8f0f0" stroke="#8a6a20"/><path d="M2.500 3h4M2.500 11.500h5" stroke="#5a7ac8"/></svg>
<span class="t" style="left:26px;top:908.0px;font-size:15px;line-height:19px;letter-spacing:0.290px;">Splitability</span>
<svg class="a" style="left:105px;top:912px;" width="10" height="10" viewBox="0 0 10 10"><path d="M0.5 0.5h2.500l2 2 2-2h2.500v2.500l-2 2 2 2v2.500h-2.500l-2-2-2 2h-2.500v-2.500l2-2-2-2z" fill="#fff" stroke="#7a7a7a" stroke-width="1"/></svg>
<svg class="a" style="left:141px;top:908px;" width="18" height="18" viewBox="0 0 18 18"><circle cx="11" cy="6.500" r="5" fill="#e8f0fa" stroke="#8a8a8a" stroke-width="1.600"/><path d="M7 10.500l-5.500 5.500" stroke="#2a6ad0" stroke-width="3" stroke-linecap="round"/></svg>
<span class="t" style="left:161px;top:908.0px;font-size:15px;line-height:19px;letter-spacing:-0.074px;">Advanced Model Se</span>
<svg class="a" style="left:292px;top:905px;" width="10" height="25" viewBox="0 0 10 25"><path d="M0 0.500Q7.500 0.500 7.500 8L7.500 24" fill="none" stroke="#b8b8b8"/></svg>
<svg class="a" style="left:279px;top:935px;" width="12" height="15" viewBox="0 0 12 15"><path d="M2 0.500v4q0 2 4 2.500q4-.5 4-2.500v-4M6 7v4" fill="none" stroke="#2d8a3a" stroke-width="2"/><path d="M2 10.500h8l-4 4z" fill="#7fd08a" stroke="#2d8a3a"/></svg>
<svg class="a" style="left:301px;top:935px;" width="13" height="15" viewBox="0 0 13 15"><path d="M6.500 0.500v4M6.500 4.500q-4 .5-4 3v3M6.500 4.500q4 .5 4 3v3" fill="none" stroke="#7a3fb0" stroke-width="2"/><path d="M0 10h5l-2.500 4zM8 10h5l-2.500 4z" fill="#c8a0e8" stroke="#7a3fb0" stroke-width=".8"/></svg>
<svg class="a" style="left:325px;top:935px;" width="10" height="15" viewBox="0 0 10 15"><path d="M8 0.500q-4 2-3.500 5.500v4" fill="none" stroke="#2a9aa0" stroke-width="2"/><path d="M0.500 9.500h8l-4 4.500z" fill="#8ae0e0" stroke="#2a9aa0"/></svg>
<svg class="a" style="left:346px;top:934px;" width="16" height="16" viewBox="0 0 16 16"><circle cx="8" cy="8" r="7" fill="#fff" stroke="#2a62b8" stroke-width="1.5"/><text x="8" y="12" font-size="11" font-weight="bold" font-family="Liberation Sans" text-anchor="middle" fill="#2a62b8">?</text></svg>
<div class="a " style="left:6px;top:962px;width:360px;height:207px;background:#fff;border:1px solid #b4b4b4;"></div>
<div class="a" style="left:7px;top:963px;width:358px;height:24px;background:linear-gradient(#fff,#fff 40%,#f4f5f6 42%,#f2f3f4);border-bottom:1px solid #d5d5d5;"></div>
<div class="a" style="left:206px;top:963px;width:1px;height:24px;background:#dedfe0;"></div>
<div class="a" style="left:306px;top:963px;width:1px;height:24px;background:#dedfe0;"></div>
<span class="t" style="left:13px;top:967.0px;font-size:15px;line-height:19px;letter-spacing:0.119px;">Object/File</span>
<span class="t" style="left:213px;top:967.0px;font-size:15px;line-height:19px;letter-spacing:-0.189px;">Read-Only</span>
<span class="t" style="left:313px;top:967.0px;font-size:15px;line-height:19px;letter-spacing:-0.465px;">Path</span>
<svg class="a" style="left:15px;top:997px;" width="8" height="8" viewBox="0 0 8 8"><path d="M7 1v6H1z" fill="#404040"/></svg>
<svg class="a" style="left:31px;top:995px;" width="14" height="10" viewBox="0 0 14 10"><rect x="1.5" y="0.5" width="11" height="8" fill="#b5d3e6" stroke="#333"/><rect x="0" y="3" width="3" height="3" fill="#fff" stroke="#333" stroke-width=".8"/><rect x="4" y="4" width="2" height="2" fill="#235"/><rect x="6.5" y="2.5" width="2" height="2" fill="#235"/><rect x="9" y="4" width="2" height="2" fill="#235"/></svg>
<span class="t" style="left:50px;top:991.0px;font-size:15px;line-height:19px;letter-spacing:-0.536px;">ECUFlatView</span>
<svg class="a" style="left:51px;top:1015px;" width="12" height="15" viewBox="0 0 12 15"><path d="M0.5 0.5h7l3.500 3.500v10h-10.500z" fill="#fffdf0" stroke="#8a7a4a"/><path d="M2.500 5.500h6M2.500 7.500h6M2.500 9.500h6M2.500 11.500h6" stroke="#4a6fb0"/></svg>
<span class="t" style="left:69px;top:1014.0px;font-size:15px;line-height:19px;letter-spacing:-0.426px;">SeatHeater_Dual_Ext</span>
<div class="a" style="left:312px;top:1012px;width:53px;height:22px;overflow:hidden;"><span class="t" style="left:0;top:1.500px;line-height:19px;letter-spacing:-0.200px;">/EcuExtract</span></div>
<div class="a" style="left:7px;top:1150px;width:358px;height:18px;background:#f0f0f0;"></div>
<div class="a" style="left:29px;top:1150px;width:279px;height:18px;border:1px solid #979797;border-radius:2px;background:linear-gradient(#f0f0f0,#e3e3e3 45%,#cfcfcf 50%,#d9d9d9);"></div>
<div class="a" style="left:165px;top:1155px;width:1px;height:8px;background:#4d4d4d;"></div>
<div class="a" style="left:168px;top:1155px;width:1px;height:8px;background:#4d4d4d;"></div>
<div class="a" style="left:171px;top:1155px;width:1px;height:8px;background:#4d4d4d;"></div>
<svg class="a" style="left:13px;top:1154px;" width="6" height="9"><path d="M5 0v9l-5-4.500z" fill="#404040"/></svg>
<svg class="a" style="left:353px;top:1154px;" width="6" height="9"><path d="M0 0v9l5-4.500z" fill="#404040"/></svg>
<svg class="a" style="left:374px;top:89px;" width="226" height="25" viewBox="0 0 226 25"><defs><linearGradient id="gw" x1="0" y1="0" x2="0" y2="1"><stop offset="0" stop-color="#ffffff"/><stop offset="1" stop-color="#ececec"/></linearGradient></defs><path d="M0 24 L0 10 Q0 0 10 0 L184 0 Q191 0.500 196 6 L210 18.5 Q214 23 221 23.5 L224 24 Z" fill="url(#gw)"/><path d="M0 24 L0 10 Q0 0 10 0 L184 0 Q191 0.500 196 6 L210 18.5 Q214 23 221 23.5" fill="none" stroke="#a8a8a8" stroke-width="1"/></svg>
<svg class="a" style="left:377px;top:93px;" width="17" height="17" viewBox="0 0 17 17"><rect x="1.500" y="2.500" width="11" height="9" fill="#c5d8ea" stroke="#333"/><rect x="0" y="5.500" width="3" height="3" fill="#fff" stroke="#333" stroke-width=".8"/><rect x="4" y="6" width="2" height="2" fill="#235"/><rect x="7" y="4.500" width="2" height="2" fill="#235"/><path d="M15.500 1l-9 10" stroke="#333" stroke-width="2.400"/><path d="M15.500 1l-9 10" stroke="#9ab" stroke-width="1"/><path d="M6 11.500l-3.500 3.500" stroke="#e8e020" stroke-width="1.600"/></svg>
<span class="t" style="left:397px;top:92.0px;font-size:15px;line-height:19px;letter-spacing:-0.364px;">ECUFlatView_Diagram</span>
<svg class="a" style="left:551px;top:96px;" width="10" height="10" viewBox="0 0 10 10"><path d="M0.5 0.5h2.500l2 2 2-2h2.500v2.500l-2 2 2 2v2.500h-2.500l-2-2-2 2h-2.500v-2.500l2-2-2-2z" fill="#fff" stroke="#7a7a7a" stroke-width="1"/></svg>
<svg class="a" style="left:589px;top:93px;" width="17" height="16" viewBox="0 0 17 16"><circle cx="6" cy="5.500" r="4.500" fill="#3a9a5a" stroke="#1a6a3a"/><path d="M3 4h2l1 2h3M4 8l2-1" stroke="#bfe8c8" fill="none"/><circle cx="6.500" cy="11" r="3.200" fill="#fff" stroke="#2a5ab0" stroke-width="1.300"/><path d="M6.500 9v2h1.500" stroke="#2a5ab0" fill="none"/><path d="M11 6.500h5M11 9.500h5M11 12.500h5" stroke="#6a8ac8"/></svg>
<span class="t" style="left:608px;top:92.0px;font-size:15px;line-height:19px;letter-spacing:-0.067px;">EcuConfiguration</span>
<svg class="a" style="left:740px;top:89px;" width="10" height="25" viewBox="0 0 10 25"><path d="M0 0.500Q7.500 0.500 7.500 8L7.500 24" fill="none" stroke="#b8b8b8"/></svg>
<div class="a " style="left:375px;top:113px;width:1093px;height:692px;background:#fff;"></div>
<div class="a " style="left:375px;top:113px;width:1093px;height:43px;background:linear-gradient(#fff,#fbfcfe 40%,#e6edf8);"></div>
<div class="a " style="left:375px;top:156px;width:1093px;height:1px;background:#aac2e0;"></div>
<svg class="a" style="left:381px;top:131px;" width="17" height="17" viewBox="0 0 17 17"><rect x="1.500" y="2.500" width="11" height="9" fill="#c5d8ea" stroke="#333"/><rect x="0" y="5.500" width="3" height="3" fill="#fff" stroke="#333" stroke-width=".8"/><rect x="4" y="6" width="2" height="2" fill="#235"/><rect x="7" y="4.500" width="2" height="2" fill="#235"/><path d="M15.500 1l-9 10" stroke="#333" stroke-width="2.400"/><path d="M15.500 1l-9 10" stroke="#9ab" stroke-width="1"/><path d="M6 11.500l-3.500 3.500" stroke="#e8e020" stroke-width="1.600"/></svg>
<span class="t" style="left:403px;top:124.5px;font-size:21px;line-height:25px;letter-spacing:-0.790px;font-weight:bold;color:#1b4b86;">Graphical Composition SWC Editor</span>
<span class="t" style="left:744px;top:129.0px;font-size:15px;line-height:19px;letter-spacing:-0.254px;">/swc/ECUFlatView</span>
<div class="a " style="left:897px;top:131px;width:1px;height:22px;background:#a0a0a0;"></div>
<div class="a " style="left:899px;top:131px;width:54px;height:22px;background:#f0f0f0;"></div>
<div class="a " style="left:953px;top:131px;width:23px;height:22px;background:#fff;"></div>
<div class="a " style="left:976px;top:131px;width:1px;height:22px;background:#a0a0a0;"></div>
<svg class="a" style="left:961px;top:140px;" width="9" height="5" viewBox="0 0 9 5"><path d="M0 0h9l-4.500 5z" fill="#777"/></svg>
<svg class="a" style="left:981px;top:134px;" width="15" height="15" viewBox="0 0 15 15"><circle cx="6" cy="6" r="5" fill="#f4f0e0" stroke="#a89868" stroke-width="1.400"/><path d="M9.800 9.800l4 4" stroke="#8a5a3a" stroke-width="2"/><path d="M3.500 6h5M6 3.500v5" stroke="#1a3fb0" stroke-width="1.500"/></svg>
<svg class="a" style="left:1004px;top:134px;" width="15" height="15" viewBox="0 0 15 15"><circle cx="6" cy="6" r="5" fill="#f4f0e0" stroke="#a89868" stroke-width="1.400"/><path d="M9.800 9.800l4 4" stroke="#8a5a3a" stroke-width="2"/><path d="M3.500 6h5" stroke="#1a3fb0" stroke-width="1.500"/></svg>
<svg class="a" style="left:1027px;top:134px;" width="17" height="17" viewBox="0 0 17 17"><rect x="1" y="1" width="15" height="15" fill="none" stroke="#1a4aa0" stroke-width="1.600" stroke-dasharray="2 3"/><rect x="3.500" y="3.500" width="4" height="4" fill="#dde8f8" stroke="#4a7ac8"/><rect x="3.500" y="10" width="4" height="4" fill="#dde8f8" stroke="#4a7ac8"/><rect x="10" y="10" width="4" height="4" fill="#dde8f8" stroke="#4a7ac8"/><path d="M7.500 5.500l4.500 4.500M5.500 7.500v2.500M7.500 12h2.500" stroke="#4a7ac8"/></svg>
<svg class="a" style="left:1051px;top:140px;" width="9" height="5" viewBox="0 0 9 5"><path d="M0 0h9l-4.500 5z" fill="#000"/></svg>
<svg class="a" style="left:1068px;top:134px;" width="17" height="17" viewBox="0 0 17 17"><rect x="0.500" y="2.500" width="15" height="11" rx="1.500" fill="#fff" stroke="#666"/><path d="M6 2.500h9v11h-5z" fill="#8cc4f0"/><rect x="2.500" y="5.500" width="5" height="5" fill="#fff" stroke="#999"/><path d="M5 0.500l6 16" stroke="#111" stroke-width="1.400"/></svg>
<div class="a " style="left:1090px;top:133px;width:1px;height:18px;background:#909090;"></div>
<svg class="a" style="left:1100px;top:134px;" width="16" height="16" viewBox="0 0 16 16"><rect x="0.500" y="6" width="5" height="5" rx="1" fill="#b8d898" stroke="#98b878"/><rect x="10.500" y="0.500" width="5" height="5" rx="1" fill="#b8d898" stroke="#98b878"/><rect x="10.500" y="10" width="5" height="5" rx="1" fill="#eef2fc" stroke="#6a8ac8"/></svg>
<svg class="a" style="left:1124px;top:140px;" width="9" height="5" viewBox="0 0 9 5"><path d="M0 0h9l-4.500 5z" fill="#000"/></svg>
<svg class="a" style="left:1141px;top:133px;" width="16" height="17" viewBox="0 0 16 17"><rect x="10" y="1" width="4" height="4" fill="#fff" stroke="#e8a020" stroke-width="1.400"/><rect x="0.500" y="6" width="5" height="5" fill="#4a9a4a" stroke="#2a6a2a"/><rect x="3" y="12" width="5" height="5" fill="#4a7ac8" stroke="#2a4a8a"/><path d="M6 8.500h6M8 14.500h4" stroke="#111" stroke-width="1.300"/><path d="M10.500 6.500l2.500 2-2.500 2zM10.500 12.500l2.500 2-2.500 2z" fill="#111"/><path d="M14.500 6v11" stroke="#111" stroke-dasharray="1 1"/></svg>
<svg class="a" style="left:1166px;top:140px;" width="9" height="5" viewBox="0 0 9 5"><path d="M0 0h9l-4.500 5z" fill="#000"/></svg>
<div class="a " style="left:1183px;top:133px;width:1px;height:18px;background:#909090;"></div>
<svg class="a" style="left:1192px;top:135px;" width="17" height="14" viewBox="0 0 17 14"><path d="M0.800 3.500h3.500l1.500-2.500h5l1.500 2.500h3.500v9.500h-15z" fill="#fff" stroke="#111" stroke-width="1.400"/><circle cx="8.300" cy="8" r="3" fill="#fff" stroke="#111" stroke-width="1.400"/></svg>
<svg class="a" style="left:1216px;top:140px;" width="9" height="5" viewBox="0 0 9 5"><path d="M0 0h9l-4.500 5z" fill="#000"/></svg>
<svg class="a" style="left:1234px;top:134px;" width="16" height="16" viewBox="0 0 16 16"><path d="M0 3.500h16M0 8.500h16M0 13.500h16M3.500 0v16M8.500 0v16M13.500 0v16" stroke="#111" stroke-width="1.100"/></svg>
<svg class="a" style="left:1258px;top:140px;" width="9" height="5" viewBox="0 0 9 5"><path d="M0 0h9l-4.500 5z" fill="#000"/></svg>
<svg class="a" style="left:1276px;top:134px;" width="17" height="16" viewBox="0 0 17 16"><rect x="0.600" y="0.600" width="15" height="14.500" fill="#fff" stroke="#111" stroke-width="1.200"/><circle cx="7" cy="6.500" r="3.500" fill="#e0ecfa" stroke="#2a5ab0" stroke-width="1.400"/><path d="M9.500 9.500l4 4.500" stroke="#1a3a8a" stroke-width="2.200"/><path d="M2 13.500h6" stroke="#3a6ac8" stroke-dasharray="1 1"/></svg>
<svg class="a" style="left:1300px;top:140px;" width="9" height="5" viewBox="0 0 9 5"><path d="M0 0h9l-4.500 5z" fill="#000"/></svg>
<div class="a " style="left:1316px;top:133px;width:1px;height:18px;background:#909090;"></div>
<svg class="a" style="left:1324px;top:134px;" width="18" height="17" viewBox="0 0 18 17"><rect x="0.600" y="0.600" width="9" height="10.500" fill="#fff" stroke="#111" stroke-width="1.200"/><path d="M3.500 3v5.500l4-2.700z" fill="#111"/><path d="M10 6.500h5M10 13h5M4 13h4" stroke="#111" stroke-width="1.200"/><path d="M13 4l3.500 2.500-3.500 2.500zM13 10.500l3.500 2.500-3.500 2.500z" fill="#111"/></svg>
<div class="a " style="left:1348px;top:133px;width:1px;height:18px;background:#909090;"></div>
<svg class="a" style="left:1356px;top:134px;" width="17" height="17" viewBox="0 0 17 17"><path d="M0.600 0.600h7l3 3v9h-10z" fill="#fff" stroke="#111" stroke-width="1.200"/><path d="M3 6.500h2M3 9h2" stroke="#111"/><circle cx="11.500" cy="11.500" r="3.500" fill="#e8a020" stroke="#8a5a10"/><circle cx="11.500" cy="11.500" r="1.300" fill="#fff"/></svg>
<svg class="a" style="left:1381px;top:140px;" width="9" height="5" viewBox="0 0 9 5"><path d="M0 0h9l-4.500 5z" fill="#000"/></svg>
<svg class="a" style="left:1399px;top:134px;" width="16" height="16" viewBox="0 0 16 16"><path d="M0.500 1.500h8l3 3v10.500h-11z" fill="#fff" stroke="#222"/><path d="M3 8.500l3 4 7-11" fill="none" stroke="#1d8a1d" stroke-width="2.200"/></svg>
<svg class="a" style="left:1423px;top:140px;" width="9" height="5" viewBox="0 0 9 5"><path d="M0 0h9l-4.500 5z" fill="#000"/></svg>
<svg class="a" style="left:1440px;top:134px;" width="16" height="16" viewBox="0 0 16 16"><circle cx="8" cy="8" r="7" fill="#fff" stroke="#2a62b8" stroke-width="1.5"/><text x="8" y="12" font-size="11" font-weight="bold" font-family="Liberation Sans" text-anchor="middle" fill="#2a62b8">?</text></svg>
<div class="a " style="left:381px;top:162px;width:952px;height:635px;background:#fff;border:1px solid #000;"></div>
<div class="a " style="left:1336px;top:162px;width:1px;height:636px;background:#a0a0a0;"></div>
<div class="a " style="left:1338px;top:163px;width:125px;height:25px;background:linear-gradient(#fff,#fdfdfd 50%,#ececec);"></div>
<div class="a " style="left:1338px;top:188px;width:125px;height:1px;background:#d0d0d0;"></div>
<div class="a " style="left:1338px;top:189px;width:125px;height:2px;background:#9a9a9a;"></div>
<svg class="a" style="left:1341px;top:169px;" width="15" height="15" viewBox="0 0 15 15"><circle cx="7.500" cy="7.500" r="7" fill="#f0f0f4" stroke="#c8c8d0"/><circle cx="5.500" cy="3.800" r="1.500" fill="#f0b020"/><circle cx="9.800" cy="3.800" r="1.500" fill="#48a838"/><circle cx="3.500" cy="7.500" r="1.500" fill="#f07020"/><circle cx="11.500" cy="7.500" r="1.500" fill="#38a058"/><circle cx="5.500" cy="11.200" r="1.500" fill="#e02828"/><circle cx="9.800" cy="11.200" r="1.500" fill="#2858d8"/></svg>
<span class="t" style="left:1359px;top:166.0px;font-size:15px;line-height:19px;letter-spacing:-0.100px;">Palette</span>
<svg class="a" style="left:1444px;top:170px;" width="7" height="12" viewBox="0 0 7 12"><path d="M0.500 0.800l5.500 5.200-5.500 5.200z" fill="#fff" stroke="#777"/></svg>
<div class="a " style="left:1338px;top:193px;width:125px;height:24px;background:#efefef;"></div>
<svg class="a" style="left:1340px;top:198px;" width="16" height="13" viewBox="0 0 16 13"><path d="M0.500 12V2q0-1.500 1.500-1.500h3.500l1.500 2h5v2.500" fill="#fbe8c0" stroke="#c89040"/><path d="M0.500 12l3-7h12l-3 7z" fill="#fdf0d0" stroke="#c89040"/></svg>
<span class="t" style="left:1358px;top:194.5px;font-size:15px;line-height:19px;letter-spacing:0.197px;">Tools</span>
<svg class="a" style="left:1450px;top:201px;" width="10" height="8" viewBox="0 0 10 8"><path d="M3.500 0.500l-3 3.500 3 3.500M6.500 0.500l3 3.500-3 3.500M3.500 0.500l3 7M6.500 0.500l-3 7" fill="none" stroke="#6a6a6a" stroke-width=".9"/></svg>
<div class="a" style="left:1351px;top:219px;width:88px;height:24px;border-radius:3px;background:#cbdff7;"></div>
<svg class="a" style="left:1357px;top:221px;" width="10" height="15" viewBox="0 0 10 15"><path d="M0.800 0.800v11l2.800-2.500 2 4.500 1.800-.8-2-4.300h3.600z" fill="#f4f0d8" stroke="#555" stroke-width="1"/></svg>
<span class="t" style="left:1372px;top:221.0px;font-size:15px;line-height:19px;letter-spacing:-0.281px;">Select</span>
<svg class="a" style="left:1354px;top:248px;" width="15" height="14" viewBox="0 0 15 14"><rect x="0.500" y="0.500" width="10" height="10" fill="none" stroke="#8a7a3a" stroke-dasharray="2 1.500"/><path d="M0.500 5v5.500h10" fill="none" stroke="#2a4a9a" stroke-dasharray="2 1.500"/><rect x="3.500" y="3.500" width="4" height="4" fill="#eef" stroke="#999"/><path d="M10 12h5M12.500 9.500v5" stroke="#1a3a8a"/></svg>
<span class="t" style="left:1372px;top:248.0px;font-size:15px;line-height:19px;letter-spacing:-0.031px;">Marquee</span>
<svg class="a" style="left:1354px;top:276px;" width="16" height="14" viewBox="0 0 16 14"><path d="M0.500 2.500h14.500v8l-3 3h-11.500z" fill="#f8e850" stroke="#c8a820"/><path d="M12 13.500v-3h3" fill="#e8d030" stroke="#c8a820"/><path d="M4.500 8V2q0-1.500 1.200-1.500t1.200 1.500v7" fill="none" stroke="#555" stroke-width="1.200"/></svg>
<span class="t" style="left:1372px;top:275.0px;font-size:15px;line-height:19px;letter-spacing:0.328px;">Note</span>
<div class="a " style="left:1338px;top:301px;width:125px;height:1px;background:#a9a9a9;"></div>
<div class="a " style="left:1338px;top:303px;width:125px;height:24px;background:#efefef;"></div>
<svg class="a" style="left:1340px;top:308px;" width="16" height="13" viewBox="0 0 16 13"><path d="M0.500 12V2q0-1.500 1.500-1.500h3.500l1.500 2h5v2.500" fill="#fbe8c0" stroke="#c89040"/><path d="M0.500 12l3-7h12l-3 7z" fill="#fdf0d0" stroke="#c89040"/></svg>
<span class="t" style="left:1358px;top:304.5px;font-size:15px;line-height:19px;letter-spacing:-0.184px;">Compositi...</span>
<svg class="a" style="left:1450px;top:311px;" width="10" height="8" viewBox="0 0 10 8"><path d="M3.500 0.500l-3 3.500 3 3.500M6.500 0.500l3 3.500-3 3.500M3.500 0.500l3 7M6.500 0.500l-3 7" fill="none" stroke="#6a6a6a" stroke-width=".9"/></svg>
<svg class="a" style="left:1354px;top:334px;" width="15" height="14" viewBox="0 0 15 14"><path d="M1.500 12.500l12-11" stroke="#111" stroke-width="1.300"/><rect x="0" y="12" width="2" height="2" fill="#111"/><rect x="13" y="0" width="2" height="2" fill="#111"/></svg>
<span class="t" style="left:1372px;top:332.0px;font-size:15px;line-height:19px;letter-spacing:-0.135px;">Connector</span>
<svg class="a" style="left:1355px;top:362px;" width="13" height="11" viewBox="0 0 13 11"><rect x="1.500" y="1.500" width="10" height="8" fill="#d8ecf8" stroke="#234" stroke-width="1.200"/><rect x="0" y="0" width="2.500" height="2.500" fill="#fff" stroke="#234" stroke-width=".8"/><rect x="10.500" y="0" width="2.500" height="2.500" fill="#fff" stroke="#234" stroke-width=".8"/><rect x="0" y="5" width="2.500" height="2.500" fill="#fff" stroke="#234" stroke-width=".8"/></svg>
<span class="t" style="left:1372px;top:359.0px;font-size:15px;line-height:19px;letter-spacing:-1.328px;">SWC</span>
<span class="t" style="left:1372px;top:379.0px;font-size:15px;line-height:19px;letter-spacing:-0.024px;">Prototype</span>
<svg class="a" style="left:1354px;top:407px;" width="15" height="15" viewBox="0 0 15 15"><rect x="0.75" y="0.75" width="13" height="13" fill="#fff" stroke="#000" stroke-width="1.5"/><path d="M10.5 2.5v9.500l-6.500-4.750z" fill="#000"/></svg>
<span class="t" style="left:1372px;top:406.0px;font-size:15px;line-height:19px;letter-spacing:-0.503px;">PPort</span>
<svg class="a" style="left:1354px;top:434px;" width="15" height="15" viewBox="0 0 15 15"><rect x="0.75" y="0.75" width="13" height="13" fill="#fff" stroke="#000" stroke-width="1.5"/><path d="M4.5 2.5v9.500l6.500-4.750z" fill="#000"/></svg>
<span class="t" style="left:1372px;top:433.0px;font-size:15px;line-height:19px;letter-spacing:-0.469px;">RPort</span>
<svg class="a" style="left:0;top:0;" width="1841" height="1199" viewBox="0 0 1841 1199"><rect x="598.5" y="228.5" width="170" height="15" fill="#f0f0f0" stroke="#000" stroke-width="1"/><rect x="598.75" y="228.75" width="13" height="14.5" fill="#fff" stroke="#000" stroke-width="1.500"/><path d="M608 231v9l-5.500-4.500z" fill="#000"/><rect x="504.5" y="249.5" width="144" height="14" fill="#f0f0f0" stroke="#000" stroke-width="1"/><rect x="504.75" y="249.75" width="13" height="13.5" fill="#fff" stroke="#000" stroke-width="1.500"/><path d="M509 252v9l5.500-4.500z" fill="#000"/><path d="M568.500 264V295q0 3 -3 3H513.5q-3 0 -3 3V336" fill="none" stroke="#000" stroke-width="1.150"/><path d="M674.500 244V285.5q0 3 -3 3H591.5q-3 0 -3 3V336" fill="none" stroke="#000" stroke-width="1.150"/><path d="M654.500 336V332.5q0 -3 3 -3H1164.5q3 0 3 3V340" fill="none" stroke="#000" stroke-width="1.150"/><path d="M673 366.500H722" fill="none" stroke="#000" stroke-width="1.150"/><path d="M673 379.500H722" fill="none" stroke="#000" stroke-width="1.150"/><path d="M438.500 451V580" fill="none" stroke="#000" stroke-width="1.150"/><path d="M599.500 451V580" fill="none" stroke="#000" stroke-width="1.150"/><path d="M632.500 451V580" fill="none" stroke="#000" stroke-width="1.150"/><path d="M741.500 452V517.5q0 3 -3 3H469.5q-3 0 -3 3V580" fill="none" stroke="#000" stroke-width="1.150"/><path d="M863.500 452V506.5q0 3 -3 3H494.5q-3 0 -3 3V580" fill="none" stroke="#000" stroke-width="1.150"/><path d="M773.500 452V580" fill="none" stroke="#000" stroke-width="1.150"/><path d="M804.500 452V580" fill="none" stroke="#000" stroke-width="1.150"/><path d="M969.500 452V476.5q0 3 3 3H1062" fill="none" stroke="#000" stroke-width="1.150"/><path d="M1062 400.500H1044.5q-3 0 -3 3V580" fill="none" stroke="#000" stroke-width="1.150"/><path d="M1144.500 524V580" fill="none" stroke="#000" stroke-width="1.150"/><rect x="429.5" y="343.5" width="240" height="104" fill="rgba(0,0,0,.16)"/><rect x="428.5" y="342.5" width="239" height="103" fill="#e4eefc" stroke="#111" stroke-width="1"/><rect x="729.5" y="347.5" width="276" height="101" fill="rgba(0,0,0,.16)"/><rect x="728.5" y="346.5" width="275" height="100" fill="#e4eefc" stroke="#111" stroke-width="1"/><rect x="1069.5" y="347.5" width="230" height="73" fill="rgba(0,0,0,.16)"/><rect x="1068.5" y="346.5" width="229" height="72" fill="#40007c" stroke="#2a0058" stroke-width="1"/><rect x="1069.5" y="447.5" width="230" height="73" fill="rgba(0,0,0,.16)"/><rect x="1068.5" y="446.5" width="229" height="72" fill="#40007c" stroke="#2a0058" stroke-width="1"/><rect x="400.5" y="587.5" width="141" height="73" fill="rgba(0,0,0,.16)"/><rect x="399.5" y="586.5" width="140" height="72" fill="#488080" stroke="#123" stroke-width="1"/><rect x="562.5" y="587.5" width="256" height="73" fill="rgba(0,0,0,.16)"/><rect x="561.5" y="586.5" width="255" height="72" fill="#488080" stroke="#123" stroke-width="1"/><rect x="840.5" y="587.5" width="95" height="73" fill="rgba(0,0,0,.16)"/><rect x="839.5" y="586.5" width="94" height="72" fill="#488080" stroke="#123" stroke-width="1"/><rect x="954.5" y="587.5" width="261" height="73" fill="rgba(0,0,0,.16)"/><rect x="953.5" y="586.5" width="260" height="72" fill="#0080c4" stroke="#123" stroke-width="1"/><rect x="505.1" y="335.6" width="11.800" height="11.800" fill="#fff" stroke="#000" stroke-width="1.200"/><path d="M507 340.5h8l-4 4z" fill="#000"/><rect x="582.1" y="335.6" width="11.800" height="11.800" fill="#fff" stroke="#000" stroke-width="1.200"/><path d="M583.5 344.0h9l-3-4.500h-3z" fill="#000"/><rect x="648.6" y="335.6" width="11.800" height="11.800" fill="#fff" stroke="#000" stroke-width="1.200"/><path d="M651.0 339.5a3.500 4 0 0 0 7 0" fill="none" stroke="#000" stroke-width="1.600"/><rect x="660.6" y="361.1" width="11.800" height="11.800" fill="#fff" stroke="#000" stroke-width="1.200"/><path d="M663.0 362.5h2l5 4.500-5 4.500h-2z" fill="#000"/><rect x="660.6" y="374.1" width="11.800" height="11.800" fill="#fff" stroke="#000" stroke-width="1.200"/><path d="M670.0 375.5h-2l-5 4.500 5 4.500h2z" fill="#000"/><rect x="722.6" y="361.1" width="11.800" height="11.800" fill="#fff" stroke="#000" stroke-width="1.200"/><path d="M725.0 362.5h2l5 4.500-5 4.500h-2z" fill="#000"/><rect x="722.6" y="374.1" width="11.800" height="11.800" fill="#fff" stroke="#000" stroke-width="1.200"/><path d="M732.0 375.5h-2l-5 4.500 5 4.500h2z" fill="#000"/><rect x="432.6" y="438.6" width="11.800" height="11.800" fill="#000" stroke="#000" stroke-width="1.200"/><path d="M435.0 447.5v-2a3.500 3.800 0 0 1 7 0v2" fill="none" stroke="#fff" stroke-width="1.600"/><rect x="593.6" y="438.6" width="11.800" height="11.800" fill="#000" stroke="#000" stroke-width="1.200"/><path d="M595.0 447.0h9l-3-4.500h-3z" fill="#fff"/><rect x="626.1" y="438.6" width="11.800" height="11.800" fill="#000" stroke="#000" stroke-width="1.200"/><path d="M628.5 447.5v-2a3.500 3.800 0 0 1 7 0v2" fill="none" stroke="#fff" stroke-width="1.600"/><rect x="735.6" y="439.6" width="11.800" height="11.800" fill="#000" stroke="#000" stroke-width="1.200"/><path d="M738.0 448.5v-2a3.500 3.800 0 0 1 7 0v2" fill="none" stroke="#fff" stroke-width="1.600"/><rect x="767.1" y="439.6" width="11.800" height="11.800" fill="#000" stroke="#000" stroke-width="1.200"/><path d="M770 442.0h6l-3 3zM769.5 446.0l2 1.500-2 1.500zM776.5 446.0l-2 1.500 2 1.500zM771.5 449.5l1.500-2 1.500 2z" fill="#fff"/><rect x="798.6" y="439.6" width="11.800" height="11.800" fill="#000" stroke="#000" stroke-width="1.200"/><path d="M801.0 448.5v-2a3.500 3.800 0 0 1 7 0v2" fill="none" stroke="#fff" stroke-width="1.600"/><rect x="857.6" y="439.6" width="11.800" height="11.800" fill="#000" stroke="#000" stroke-width="1.200"/><path d="M860.0 448.5v-2a3.500 3.800 0 0 1 7 0v2" fill="none" stroke="#fff" stroke-width="1.600"/><rect x="963.6" y="439.6" width="11.800" height="11.800" fill="#fff" stroke="#000" stroke-width="1.200"/><path d="M966.0 448.5v-2a3.500 3.800 0 0 1 7 0v2" fill="none" stroke="#000" stroke-width="1.600"/><rect x="1162.1" y="340.1" width="11.800" height="11.800" fill="#fff" stroke="#000" stroke-width="1.200"/><circle cx="1168" cy="346" r="4" fill="none" stroke="#000" stroke-width="1.500"/><rect x="1062.6" y="394.6" width="11.800" height="11.800" fill="#fff" stroke="#000" stroke-width="1.200"/><path d="M1066.5 397.0h1a3.500 3.500 0 0 1 0 7h-1" fill="none" stroke="#000" stroke-width="1.400"/><rect x="1062.6" y="473.6" width="11.800" height="11.800" fill="#fff" stroke="#000" stroke-width="1.200"/><circle cx="1068.5" cy="479.5" r="4" fill="none" stroke="#000" stroke-width="1.500"/><rect x="1138.6" y="511.6" width="11.800" height="11.800" fill="#fff" stroke="#000" stroke-width="1.200"/><path d="M1141.0 520.5v-2a3.500 3.800 0 0 1 7 0v2" fill="none" stroke="#000" stroke-width="1.600"/><rect x="433.6" y="580.6" width="11.800" height="11.800" fill="#000" stroke="#000" stroke-width="1.200"/><circle cx="439.5" cy="586.5" r="4" fill="none" stroke="#fff" stroke-width="1.500"/><rect x="461.6" y="580.6" width="11.800" height="11.800" fill="#000" stroke="#000" stroke-width="1.200"/><circle cx="467.5" cy="586.5" r="4" fill="none" stroke="#fff" stroke-width="1.500"/><rect x="486.6" y="580.6" width="11.800" height="11.800" fill="#000" stroke="#000" stroke-width="1.200"/><circle cx="492.5" cy="586.5" r="4" fill="none" stroke="#fff" stroke-width="1.500"/><rect x="509.6" y="580.6" width="11.800" height="11.800" fill="#000" stroke="#000" stroke-width="1.200"/><circle cx="515.5" cy="586.5" r="4" fill="none" stroke="#fff" stroke-width="1.500"/><rect x="569.6" y="581.1" width="11.800" height="11.800" fill="#fff" stroke="#000" stroke-width="1.200"/><path d="M572.0 583.5h7l-3.500 3.500zM571.5 591.5l4-4 1 1.500 1.500-.5v3z" fill="#000"/><rect x="594.6" y="580.6" width="11.800" height="11.800" fill="#000" stroke="#000" stroke-width="1.200"/><path d="M596.0 589.0h9l-3-4.500h-3z" fill="#fff"/><rect x="627.1" y="580.6" width="11.800" height="11.800" fill="#000" stroke="#000" stroke-width="1.200"/><circle cx="633" cy="586.5" r="4" fill="none" stroke="#fff" stroke-width="1.500"/><rect x="648.6" y="580.6" width="11.800" height="11.800" fill="#000" stroke="#000" stroke-width="1.200"/><circle cx="654.5" cy="586.5" r="4" fill="none" stroke="#fff" stroke-width="1.500"/><rect x="673.1" y="580.6" width="11.800" height="11.800" fill="#000" stroke="#000" stroke-width="1.200"/><circle cx="679" cy="586.5" r="4" fill="none" stroke="#fff" stroke-width="1.500"/><rect x="767.1" y="580.6" width="11.800" height="11.800" fill="#000" stroke="#000" stroke-width="1.200"/><path d="M770 583.0h6l-3 3zM769.5 587.0l2 1.500-2 1.500zM776.5 587.0l-2 1.500 2 1.500zM771.5 590.5l1.500-2 1.500 2z" fill="#fff"/><rect x="799.1" y="580.6" width="11.800" height="11.800" fill="#000" stroke="#000" stroke-width="1.200"/><circle cx="805" cy="586.5" r="4" fill="none" stroke="#fff" stroke-width="1.500"/><rect x="1036.6" y="580.6" width="11.800" height="11.800" fill="#fff" stroke="#000" stroke-width="1.200"/><circle cx="1042.5" cy="586.5" r="4" fill="none" stroke="#000" stroke-width="1.500"/><rect x="1139.1" y="580.6" width="11.800" height="11.800" fill="#fff" stroke="#000" stroke-width="1.200"/><circle cx="1145" cy="586.5" r="4" fill="none" stroke="#000" stroke-width="1.500"/><path d="M444 359.5h2.500" stroke="#777" stroke-width="1"/><path d="M446.5 359.5l2.500-3 2.500 3-2.500 3zM451.5 356.5l2.500 3-2.500 3" fill="#fff" stroke="#888" stroke-width=".9"/><rect x="644.5" y="354.5" width="8" height="7" fill="#7fa3d2" stroke="#9ab"/><path d="M645 356.5h7M645 358.5h7" stroke="#a9c4e6" stroke-dasharray="1 1"/><rect x="643" y="356.5" width="2.500" height="2.500" fill="#123"/><path d="M543.0 369h9l-4.500 4.500z" fill="#000"/><path d="M741 363.5h2.500" stroke="#777" stroke-width="1"/><path d="M743.5 363.5l2.500-3 2.500 3-2.500 3zM748.5 360.5l2.500 3-2.500 3" fill="#fff" stroke="#888" stroke-width=".9"/><rect x="980.5" y="358.5" width="8" height="7" fill="#7fa3d2" stroke="#9ab"/><path d="M981 360.5h7M981 362.5h7" stroke="#a9c4e6" stroke-dasharray="1 1"/><rect x="979" y="360.5" width="2.500" height="2.500" fill="#123"/><path d="M861.5 374h9l-4.500 4.500z" fill="#000"/><path d="M1083 363.5h3" stroke="#000" stroke-width="1.200"/><path d="M1085.5 363.5l2.600-3.500 1.150 2.400 1.150-2.400 2.600 3.500-2.600 3.500-1.150-2.400-1.150 2.400z" fill="#fffff0"/><rect x="1273.5" y="359.5" width="8" height="7" fill="#7fa3d2" stroke="#667"/><path d="M1274 361.5h7M1274 363.5h7" stroke="#a9c4e6" stroke-dasharray="1 1"/><path d="M1271 360.5h2M1271 363h2M1271 365.5h2M1282 360.5h2.500M1282 365.5h2.500" stroke="#444" stroke-dasharray="1 1"/><path d="M1178.5 374h9l-4.500 4.500z" fill="#000"/><path d="M1083.5 463.5h3" stroke="#000" stroke-width="1.200"/><path d="M1086.0 463.5l2.600-3.500 1.150 2.400 1.150-2.400 2.600 3.500-2.600 3.500-1.150-2.400-1.150 2.400z" fill="#fffff0"/><rect x="1273.5" y="459.5" width="8" height="7" fill="#7fa3d2" stroke="#667"/><path d="M1274 461.5h7M1274 463.5h7" stroke="#a9c4e6" stroke-dasharray="1 1"/><path d="M1271 460.5h2M1271 463h2M1271 465.5h2M1282 460.5h2.500M1282 465.5h2.500" stroke="#444" stroke-dasharray="1 1"/><path d="M1178.5 474h9l-4.500 4.500z" fill="#000"/><path d="M415.3 604.5h3" stroke="#000" stroke-width="1.200"/><path d="M417.8 604.5l2.600-3.500 1.150 2.400 1.150-2.400 2.600 3.500-2.600 3.500-1.150-2.400-1.150 2.400z" fill="#fffff0"/><rect x="517.5" y="600.5" width="8" height="7" fill="#7fa3d2" stroke="#9ab"/><path d="M518 602.5h7M518 604.5h7" stroke="#a9c4e6" stroke-dasharray="1 1"/><rect x="516" y="602.5" width="2.500" height="2.500" fill="#123"/><path d="M464.0 614h9l-4.500 4.500z" fill="#000"/><path d="M577 604.5h3" stroke="#000" stroke-width="1.200"/><path d="M579.5 604.5l2.600-3.500 1.150 2.400 1.150-2.400 2.600 3.500-2.600 3.500-1.150-2.400-1.150 2.400z" fill="#fffff0"/><rect x="794.5" y="600.5" width="8" height="7" fill="#7fa3d2" stroke="#9ab"/><path d="M795 602.5h7M795 604.5h7" stroke="#a9c4e6" stroke-dasharray="1 1"/><rect x="793" y="602.5" width="2.500" height="2.500" fill="#123"/><path d="M684.5 614h9l-4.500 4.500z" fill="#000"/><path d="M854.4 604.5h3" stroke="#000" stroke-width="1.200"/><path d="M856.9 604.5l2.600-3.500 1.150 2.400 1.150-2.400 2.600 3.500-2.600 3.500-1.150-2.400-1.150 2.400z" fill="#fffff0"/><rect x="911.5" y="600.5" width="8" height="7" fill="#7fa3d2" stroke="#9ab"/><path d="M912 602.5h7M912 604.5h7" stroke="#a9c4e6" stroke-dasharray="1 1"/><rect x="910" y="602.5" width="2.500" height="2.500" fill="#123"/><path d="M881.0 614h9l-4.500 4.500z" fill="#000"/><path d="M968.5 604.5h3" stroke="#000" stroke-width="1.200"/><path d="M971.0 604.5l2.600-3.500 1.150 2.400 1.150-2.400 2.600 3.500-2.600 3.500-1.150-2.400-1.150 2.400z" fill="#fffff0"/><rect x="1190.5" y="600.5" width="8" height="8" fill="#7fa3d2" stroke="#667"/><path d="M1191 602.5h7M1191 604.5h7M1191 606.5h7" stroke="#a9c4e6" stroke-dasharray="1 1"/><path d="M1192 597v3M1194.5 597v3M1197 597v3M1192 609v3M1197 609v3" stroke="#333" stroke-dasharray="1 1"/><path d="M1078.5 614h9l-4.500 4.500z" fill="#000"/></svg>
<div class="a" style="left:598px;top:228px;width:171px;height:15px;overflow:hidden;"><span class="t" style="left:17px;top:2px;font-size:14px;line-height:18px;font-weight:bold;letter-spacing:-0.402px;">SeatTemperatureToHMI</span></div>
<div class="a" style="left:504px;top:249px;width:145px;height:14px;overflow:hidden;"><span class="t" style="left:16px;top:2px;font-size:14px;line-height:18px;font-weight:bold;letter-spacing:-0.368px;">HeatModeFromHMI</span></div>
<span class="t" style="left:456px;top:351.5px;font-size:14px;line-height:18px;letter-spacing:-0.640px;font-weight:bold;">HeatControl_SeatHeaterAdpr</span>
<span class="t" style="left:756px;top:355.5px;font-size:14px;line-height:18px;letter-spacing:-0.687px;font-weight:bold;">HeatControl_EmulatedTempSensor</span>
<span class="t" style="left:1101px;top:355.5px;font-size:14px;line-height:18px;letter-spacing:-0.577px;font-weight:bold;color:#fff;">HeatControl_ActrOfHeatg</span>
<span class="t" style="left:1096px;top:455.5px;font-size:14px;line-height:18px;letter-spacing:-0.808px;font-weight:bold;color:#fff;">HeatControl_SnrColdBreeze</span>
<span class="t" style="left:452px;top:596.5px;font-size:14px;line-height:18px;letter-spacing:-1.082px;font-weight:bold;color:#fff;">EcuM</span>
<span class="t" style="left:668px;top:596.5px;font-size:14px;line-height:18px;letter-spacing:-0.691px;font-weight:bold;color:#fff;">ComM</span>
<span class="t" style="left:867px;top:596.5px;font-size:14px;line-height:18px;letter-spacing:-1.109px;font-weight:bold;color:#fff;">BswM</span>
<span class="t" style="left:981px;top:596.5px;font-size:14px;line-height:18px;letter-spacing:-0.761px;font-weight:bold;color:#fff;">HeatControl_EcuAbstractionSeat</span>
<svg class="a" style="left:374px;top:811px;" width="187" height="25" viewBox="0 0 187 25"><defs><linearGradient id="gw" x1="0" y1="0" x2="0" y2="1"><stop offset="0" stop-color="#ffffff"/><stop offset="1" stop-color="#ececec"/></linearGradient></defs><path d="M0 24 L0 10 Q0 0 10 0 L145 0 Q152 0.500 157 6 L171 18.5 Q175 23 182 23.5 L185 24 Z" fill="url(#gw)"/><path d="M0 24 L0 10 Q0 0 10 0 L145 0 Q152 0.500 157 6 L171 18.5 Q175 23 182 23.5" fill="none" stroke="#a8a8a8" stroke-width="1"/></svg>
<svg class="a" style="left:378px;top:816px;" width="14" height="14" viewBox="0 0 14 14"><rect x="1.500" y="0.500" width="11" height="12" rx="1.500" fill="#cfd8e2" stroke="#222" stroke-width="1.200"/><rect x="0" y="3" width="2.500" height="2.500" fill="#fff" stroke="#222" stroke-width=".8"/><rect x="0" y="7.500" width="2.500" height="2.500" fill="#fff" stroke="#222" stroke-width=".8"/><rect x="6" y="3" width="3" height="2.500" fill="#222"/><rect x="4" y="7" width="2.500" height="2.500" fill="#222"/><rect x="8.500" y="7" width="2.500" height="2.500" fill="#222"/></svg>
<span class="t" style="left:397px;top:814.0px;font-size:15px;line-height:19px;letter-spacing:-0.427px;">SWC Dashboard</span>
<svg class="a" style="left:513px;top:818px;" width="10" height="10" viewBox="0 0 10 10"><path d="M0.5 0.5h2.500l2 2 2-2h2.500v2.500l-2 2 2 2v2.500h-2.500l-2-2-2 2h-2.500v-2.500l2-2-2-2z" fill="#fff" stroke="#7a7a7a" stroke-width="1"/></svg>
<svg class="a" style="left:550px;top:816px;" width="14" height="14" viewBox="0 0 14 14"><circle cx="7" cy="7" r="6.500" fill="#2222c0" stroke="#0a0a80"/><rect x="6" y="6" width="2.400" height="5" fill="#fff"/><rect x="5.200" y="6" width="2" height="1" fill="#fff"/><rect x="5" y="10.500" width="4.400" height="1" fill="#fff"/><circle cx="7" cy="3.600" r="1.400" fill="#fff"/></svg>
<span class="t" style="left:569px;top:814.0px;font-size:15px;line-height:19px;letter-spacing:0.161px;">Documentation</span>
<svg class="a" style="left:669px;top:811px;" width="10" height="25" viewBox="0 0 10 25"><path d="M0 0.500Q7.500 0.500 7.500 8L7.500 24" fill="none" stroke="#b8b8b8"/></svg>
<svg class="a" style="left:682px;top:816px;" width="14" height="14" viewBox="0 0 14 14"><path d="M0.500 0v12.500h13" fill="none" stroke="#222"/><path d="M2 11l10-10" stroke="#1a3ab0" stroke-width="2.200"/><path d="M2 2v9h9" stroke="#555" stroke-dasharray="1 2" fill="none"/></svg>
<span class="t" style="left:700px;top:814.0px;font-size:15px;line-height:19px;letter-spacing:-0.022px;">Compu Method Visualizer</span>
<svg class="a" style="left:868px;top:811px;" width="10" height="25" viewBox="0 0 10 25"><path d="M0 0.500Q7.500 0.500 7.500 8L7.500 24" fill="none" stroke="#b8b8b8"/></svg>
<svg class="a" style="left:879px;top:815px;" width="16" height="16" viewBox="0 0 16 16"><path d="M3.500 2.500h10.500v10l-3 3h-7.500z" fill="#fffbe8" stroke="#b8a050"/><circle cx="5" cy="5" r="4.500" fill="#e02020" stroke="#900"/><path d="M3.300 3.300l3.400 3.400M6.700 3.300l-3.400 3.400" stroke="#fff" stroke-width="1.300"/></svg>
<span class="t" style="left:899px;top:814.0px;font-size:15px;line-height:19px;letter-spacing:-0.172px;">Error Log</span>
<svg class="a" style="left:957px;top:811px;" width="10" height="25" viewBox="0 0 10 25"><path d="M0 0.500Q7.500 0.500 7.500 8L7.500 24" fill="none" stroke="#b8b8b8"/></svg>
<svg class="a" style="left:1329px;top:814px;" width="15" height="15" viewBox="0 0 15 15"><circle cx="5.500" cy="5.500" r="4.500" fill="#fff" stroke="#777" stroke-width="1.300"/><path d="M9 9l4.500 4.500" stroke="#666" stroke-width="2.200"/><path d="M3.200 5.500h4.600" stroke="#1a1a90" stroke-width="1.300"/></svg>
<svg class="a" style="left:1352px;top:814px;" width="15" height="15" viewBox="0 0 15 15"><circle cx="5.500" cy="5.500" r="4.500" fill="#fff" stroke="#777" stroke-width="1.300"/><path d="M9 9l4.500 4.500" stroke="#666" stroke-width="2.200"/><rect x="2.500" y="2.500" width="6" height="6" fill="#2a2a9a"/><path d="M2.500 2.500l6 6M8.500 2.500l-6 6" stroke="#fff" stroke-width=".8"/></svg>
<svg class="a" style="left:1375px;top:814px;" width="15" height="15" viewBox="0 0 15 15"><circle cx="5.500" cy="5.500" r="4.500" fill="#fff" stroke="#777" stroke-width="1.300"/><path d="M9 9l4.500 4.500" stroke="#666" stroke-width="2.200"/><path d="M3.200 5.500h4.600M5.500 3.200v4.600" stroke="#1a1a90" stroke-width="1.300"/></svg>
<svg class="a" style="left:1398px;top:813px;" width="16" height="16" viewBox="0 0 16 16"><circle cx="8" cy="8" r="7" fill="#fff" stroke="#2a62b8" stroke-width="1.5"/><text x="8" y="12" font-size="11" font-weight="bold" font-family="Liberation Sans" text-anchor="middle" fill="#2a62b8">?</text></svg>
<div class="a " style="left:375px;top:836px;width:1093px;height:334px;background:#fff;"></div>
<svg class="a" style="left:0px;top:0px;" width="1841" height="1199" viewBox="0 0 1841 1199"><path d="M521 882H579" fill="none" stroke="#000066" stroke-width="4"/><path d="M573 875l7 7-7 7" fill="none" stroke="#000066" stroke-width="4"/><path d="M461 922V904" fill="none" stroke="#000066" stroke-width="4"/><path d="M454 911l7-7 7 7" fill="none" stroke="#000066" stroke-width="4"/><path d="M701 882H759" fill="none" stroke="#000066" stroke-width="4"/><path d="M753 875l7 7-7 7" fill="none" stroke="#000066" stroke-width="4"/><path d="M731 882V1002H759" fill="none" stroke="#000066" stroke-width="4"/><path d="M753 995l7 7-7 7" fill="none" stroke="#000066" stroke-width="4"/><path d="M731 942H759" fill="none" stroke="#000066" stroke-width="4"/><path d="M753 935l7 7-7 7" fill="none" stroke="#000066" stroke-width="4"/><path d="M881 882H939" fill="none" stroke="#000066" stroke-width="4"/><path d="M933 875l7 7-7 7" fill="none" stroke="#000066" stroke-width="4"/><path d="M911 882V942H939" fill="none" stroke="#000066" stroke-width="4"/><path d="M933 935l7 7-7 7" fill="none" stroke="#000066" stroke-width="4"/></svg>
<div class="a " style="left:401px;top:862px;width:120px;height:40px;background:#34c8b4;border:1px solid #1a1a2a;"></div>
<div class="a " style="left:581px;top:862px;width:120px;height:40px;background:#964a4a;border:1px solid #1a1a2a;"></div>
<div class="a " style="left:761px;top:862px;width:120px;height:40px;background:#a8d4dc;border:1px solid #1a1a2a;"></div>
<div class="a " style="left:941px;top:862px;width:120px;height:40px;background:#4878b0;border:1px solid #1a1a2a;"></div>
<div class="a " style="left:401px;top:922px;width:120px;height:40px;background:#c8c430;border:1px solid #1a1a2a;"></div>
<div class="a " style="left:761px;top:922px;width:120px;height:40px;background:#88c4b0;border:1px solid #1a1a2a;"></div>
<div class="a " style="left:941px;top:922px;width:120px;height:40px;background:#c0ac7c;border:1px solid #1a1a2a;"></div>
<div class="a " style="left:761px;top:982px;width:120px;height:40px;background:#98c8f0;border:1px solid #1a1a2a;"></div>
<svg class="a" style="left:418px;top:875px;" width="14" height="13" viewBox="0 0 14 13"><rect x="0.500" y="0.500" width="13" height="5" fill="#2a8af0" stroke="#fff"/><rect x="0.500" y="7" width="6" height="5.500" fill="#f08a2a" stroke="#fff"/><rect x="7.500" y="7" width="6" height="5.500" fill="#f08a2a" stroke="#fff"/></svg>
<span class="t" style="left:437px;top:872.5px;font-size:15px;line-height:19px;letter-spacing:-0.123px;color:#0a0a3a;">Data Type</span>
<svg class="a" style="left:587px;top:876px;" width="16" height="12" viewBox="0 0 16 12"><path d="M0 1l9 5-9 5zM5 1l10 5-10 5" fill="#000"/><path d="M7 3.200l5.500 2.800-5.500 2.800z" fill="#964a4a"/></svg>
<span class="t" style="left:606px;top:872.5px;font-size:15px;line-height:19px;letter-spacing:-0.077px;color:#1a0a0a;">Port Interface</span>
<svg class="a" style="left:795px;top:877px;" width="17" height="10" viewBox="0 0 17 10"><rect x="3.5" y="0.5" width="9" height="8" fill="url(#chk)" stroke="#333"/><path d="M0 1.5h3M0 4.5h3M0 7.5h3" stroke="#333" stroke-dasharray="1 1"/><path d="M13 1.5h2M13 7.5h2" stroke="#333"/><path d="M14.5 0v3l2-1.5zM14.5 6v3l2-1.5z" fill="#222"/></svg>
<span class="t" style="left:815px;top:872.5px;font-size:15px;line-height:19px;letter-spacing:-1.328px;color:#0a0a3a;">SWC</span>
<svg class="a" style="left:963px;top:874px;" width="13" height="16" viewBox="0 0 13 16"><circle cx="6" cy="6" r="4.500" fill="#3aa060" stroke="#186a38"/><circle cx="6" cy="10" r="3.300" fill="#fff" stroke="#2a5ab0" stroke-width="1.200"/><path d="M10 7h3M10 10h3M10 13h3" stroke="#bcd"/></svg>
<span class="t" style="left:981px;top:863.0px;font-size:15px;line-height:19px;letter-spacing:-0.131px;color:#0a0a3a;">Internal</span>
<div class="a" style="left:975px;top:882px;width:80px;height:15px;overflow:hidden;"><span class="t" style="left:6px;top:-0.500px;line-height:19px;color:#0a0a3a;letter-spacing:-0.100px;">Behavior</span></div>
<svg class="a" style="left:409px;top:935px;" width="14" height="13" viewBox="0 0 14 13"><path d="M1 0v12h12" fill="none" stroke="#223"/><path d="M2 11l10-9" stroke="#2a4ab8" stroke-width="2.200"/><path d="M3 2v8h8" fill="none" stroke="#445" stroke-dasharray="1 2"/></svg>
<span class="t" style="left:428px;top:923.0px;font-size:15px;line-height:19px;letter-spacing:0.085px;color:#1a1a00;">Computation</span>
<div class="a" style="left:420px;top:942px;width:90px;height:15px;overflow:hidden;"><span class="t" style="left:8px;top:-0.500px;line-height:19px;color:#1a1a00;letter-spacing:-0.100px;">Method</span></div>
<svg class="a" style="left:792px;top:935px;" width="14" height="14" viewBox="0 0 14 14"><rect x="1.500" y="0.500" width="11" height="12" rx="1.500" fill="#cfd8e2" stroke="#222" stroke-width="1.200"/><rect x="0" y="3" width="2.500" height="2.500" fill="#fff" stroke="#222" stroke-width=".8"/><rect x="0" y="7.500" width="2.500" height="2.500" fill="#fff" stroke="#222" stroke-width=".8"/><rect x="6" y="3" width="3" height="2.500" fill="#222"/><rect x="4" y="7" width="2.500" height="2.500" fill="#222"/><rect x="8.500" y="7" width="2.500" height="2.500" fill="#222"/></svg>
<span class="t" style="left:810px;top:932.5px;font-size:15px;line-height:19px;letter-spacing:-1.453px;color:#0a0a3a;">CSWC</span>
<svg class="a" style="left:964px;top:934px;" width="17" height="16" viewBox="0 0 17 16"><circle cx="6" cy="6" r="4" fill="none" stroke="#111" stroke-width="2.500" stroke-dasharray="2 1.300"/><circle cx="6" cy="6" r="1.500" fill="#fff" stroke="#111"/><circle cx="11" cy="10.500" r="4" fill="#e8d020" stroke="#111" stroke-width="2" stroke-dasharray="2 1.300"/><circle cx="11" cy="10.500" r="1.300" fill="#fff"/></svg>
<span class="t" style="left:984px;top:932.5px;font-size:15px;line-height:19px;letter-spacing:-0.564px;color:#1a1a1a;">Services</span>
<svg class="a" style="left:767px;top:997px;" width="16" height="10" viewBox="0 0 16 10"><rect x="3.500" y="1.500" width="9" height="7" fill="#345" stroke="#222"/><path d="M4 3.500h8M4 5.500h8" stroke="#89a" stroke-dasharray="1 1"/><path d="M0 2.500h3M0 5h3M0 7.500h3M13 2.500h3M13 7.500h3" stroke="#222" stroke-dasharray="1 1"/></svg>
<span class="t" style="left:786px;top:992.5px;font-size:15px;line-height:19px;letter-spacing:-0.552px;color:#0a0a3a;">Parameter S...</span>
<svg class="a" style="left:1605px;top:89px;" width="184" height="25" viewBox="0 0 184 25"><defs><linearGradient id="gw" x1="0" y1="0" x2="0" y2="1"><stop offset="0" stop-color="#ffffff"/><stop offset="1" stop-color="#ececec"/></linearGradient></defs><path d="M0 24 L0 10 Q0 0 10 0 L142 0 Q149 0.500 154 6 L168 18.5 Q172 23 179 23.5 L182 24 Z" fill="url(#gw)"/><path d="M0 24 L0 10 Q0 0 10 0 L142 0 Q149 0.500 154 6 L168 18.5 Q172 23 179 23.5" fill="none" stroke="#a8a8a8" stroke-width="1"/></svg>
<svg class="a" style="left:1478px;top:92px;" width="17" height="17" viewBox="0 0 17 17"><rect x="0.500" y="0.500" width="15" height="15" fill="#e8e8e8" stroke="#222"/><circle cx="8" cy="8.500" r="5" fill="#555" stroke="#111"/><path d="M4 8.500h8M8 4v9M5 5.500q3 2 6 0M5 11.500q3-2 6 0" stroke="#eee" stroke-width=".9" fill="none"/><rect x="2" y="2" width="5" height="3" fill="#333"/></svg>
<span class="t" style="left:1498px;top:92.0px;font-size:15px;line-height:19px;letter-spacing:-0.352px;">Package Conte</span>
<svg class="a" style="left:1596px;top:89px;" width="10" height="25" viewBox="0 0 10 25"><path d="M0 0.500Q7.500 0.500 7.500 8L7.500 24" fill="none" stroke="#b8b8b8"/></svg>
<svg class="a" style="left:1608px;top:93px;" width="17" height="16" viewBox="0 0 17 16"><rect x="4.500" y="0.500" width="11" height="12" rx="1.500" fill="#cfd8e2" stroke="#222" stroke-width="1.200"/><rect x="9" y="3" width="3" height="2.500" fill="#222"/><rect x="7.500" y="7" width="2.500" height="2.500" fill="#222"/><rect x="11.500" y="7" width="2.500" height="2.500" fill="#222"/><circle cx="4.500" cy="7.500" r="3.500" fill="#e8f0fc" stroke="#2a4ab0" stroke-width="1.300"/><path d="M7 10l3.500 4" stroke="#2a4ab0" stroke-width="1.800"/></svg>
<span class="t" style="left:1628px;top:92.0px;font-size:15px;line-height:19px;letter-spacing:-0.352px;">SWC Logical Vi</span>
<svg class="a" style="left:1737px;top:96px;" width="10" height="10" viewBox="0 0 10 10"><path d="M0.5 0.5h2.500l2 2 2-2h2.500v2.500l-2 2 2 2v2.500h-2.500l-2-2-2 2h-2.500v-2.500l2-2-2-2z" fill="#fff" stroke="#7a7a7a" stroke-width="1"/></svg>
<svg class="a" style="left:1703px;top:118px;" width="14" height="15" viewBox="0 0 14 15"><rect x="0.500" y="0.500" width="9" height="10" fill="#e8eef8" stroke="#9ab0d2"/><rect x="3.500" y="3.500" width="9" height="10" fill="#fff" stroke="#7f9cc8"/><path d="M5.500 8.500h5M8 6v5" stroke="#1f4a9a" stroke-width="1.300"/></svg>
<svg class="a" style="left:1726px;top:118px;" width="14" height="15" viewBox="0 0 14 15"><rect x="0.500" y="0.500" width="9" height="10" fill="#e8eef8" stroke="#9ab0d2"/><rect x="3.500" y="3.500" width="9" height="10" fill="#fff" stroke="#7f9cc8"/><path d="M5.500 8.500h5" stroke="#1f4a9a" stroke-width="1.300"/></svg>
<svg class="a" style="left:1751px;top:120px;" width="11" height="10" viewBox="0 0 11 10"><path d="M0.500 0v10M10.500 0v10" stroke="#8aa0d8"/><path d="M2 5h7" stroke="#1a3f8a" stroke-width="1.500"/><path d="M4 2.500l-3 2.500 3 2.500zM7 2.500l3 2.500-3 2.500z" fill="#1a3f8a"/></svg>
<div class="a" style="left:1768px;top:116px;width:23px;height:20px;border:1px solid #6f6f6f;border-radius:3px;background:#dcdcdc;box-shadow:inset 1px 1px 1px #bbb;"></div>
<svg class="a" style="left:1773px;top:120px;" width="13" height="12" viewBox="0 0 13 12"><rect x="0.500" y="0.500" width="12" height="11" fill="#fff" stroke="#8a8ab0"/><rect x="1" y="1" width="11" height="2.500" fill="#3a6ad0"/><path d="M1 6.500h11M4.500 3.500v8M8.500 3.500v8" stroke="#b0a0c8"/></svg>
<svg class="a" style="left:1795px;top:117px;" width="15" height="16" viewBox="0 0 15 16"><rect x="0.500" y="5.500" width="11" height="10" fill="#fff" stroke="#8a8ab0"/><rect x="1" y="6" width="10" height="2.500" fill="#3a6ad0"/><path d="M6 10l7-7" stroke="#2a9a3a" stroke-width="3"/><path d="M5 11l2-.5-1.500-1.500z" fill="#333"/></svg>
<svg class="a" style="left:1817px;top:117px;" width="16" height="16" viewBox="0 0 16 16"><circle cx="8" cy="8" r="7" fill="#fff" stroke="#2a62b8" stroke-width="1.5"/><text x="8" y="12" font-size="11" font-weight="bold" font-family="Liberation Sans" text-anchor="middle" fill="#2a62b8">?</text></svg>
<svg class="a" style="left:1479px;top:145px;" width="14" height="10" viewBox="0 0 14 10"><rect x="1.5" y="0.5" width="11" height="8" fill="#b5d3e6" stroke="#333"/><rect x="0" y="3" width="3" height="3" fill="#fff" stroke="#333" stroke-width=".8"/><rect x="4" y="4" width="2" height="2" fill="#235"/><rect x="6.5" y="2.5" width="2" height="2" fill="#235"/><rect x="9" y="4" width="2" height="2" fill="#235"/></svg>
<span class="t" style="left:1498px;top:141.0px;font-size:15px;line-height:19px;letter-spacing:-0.536px;">ECUFlatView</span>
<div class="a " style="left:1477px;top:165px;width:272px;height:26px;background:#fff;border:1px solid #e2e3ea;border-top-color:#abadb3;"></div>
<span class="t" style="left:1481px;top:169.0px;font-size:15px;line-height:19px;letter-spacing:-0.014px;color:#6d6d6d;">type text to find...</span>
<div class="a" style="left:1755px;top:166px;width:41px;height:24px;border:1px solid #707070;border-radius:3px;background:linear-gradient(#f2f2f2,#ebebeb 48%,#dddddd 52%,#cfcfcf);box-shadow:inset 0 0 0 1px #fcfcfc;"></div>
<span class="t" style="left:1760.0px;top:169.0px;font-size:15px;line-height:19px;letter-spacing:0.039px;">Next</span>
<div class="a" style="left:1803px;top:166px;width:28px;height:24px;border:1px solid #707070;border-radius:3px;background:linear-gradient(#f2f2f2,#ebebeb 48%,#dddddd 52%,#cfcfcf);box-shadow:inset 0 0 0 1px #fcfcfc;"></div>
<span class="t" style="left:1808.0px;top:169.0px;font-size:15px;line-height:19px;letter-spacing:0.448px;">All</span>
<div class="a " style="left:1477px;top:196px;width:359px;height:540px;background:#fff;border:1px solid #b4b4b4;"></div>
<div class="a" style="left:1478px;top:197px;width:357px;height:25px;background:linear-gradient(#fff,#fff 40%,#f4f5f6 42%,#f2f3f4);border-bottom:1px solid #d5d5d5;"></div>
<div class="a" style="left:1679px;top:197px;width:1px;height:25px;background:#dedfe0;"></div>
<span class="t" style="left:1485px;top:202.0px;font-size:15px;line-height:19px;letter-spacing:-0.004px;">Name</span>
<div class="a" style="left:1479px;top:224px;width:356px;height:23px;border:1px solid #d9d9d9;border-radius:3px;background:linear-gradient(#f8f8f8,#e5e5e5);"></div>
<svg class="a" style="left:1488px;top:232px;" width="8" height="8" viewBox="0 0 8 8"><path d="M7 1v6H1z" fill="#404040"/></svg>
<svg class="a" style="left:1503px;top:230px;" width="14" height="10" viewBox="0 0 14 10"><rect x="1.5" y="0.5" width="11" height="8" fill="#b5d3e6" stroke="#333"/><rect x="0" y="3" width="3" height="3" fill="#fff" stroke="#333" stroke-width=".8"/><rect x="4" y="4" width="2" height="2" fill="#235"/><rect x="6.5" y="2.5" width="2" height="2" fill="#235"/><rect x="9" y="4" width="2" height="2" fill="#235"/></svg>
<span class="t" style="left:1522px;top:226.0px;font-size:15px;line-height:19px;letter-spacing:-0.536px;">ECUFlatView</span>
<svg class="a" style="left:1507px;top:255px;" width="8" height="8" viewBox="0 0 8 8"><path d="M7 1v6H1z" fill="#404040"/></svg>
<svg class="a" style="left:1522px;top:251px;" width="16" height="14" viewBox="0 0 16 14"><path d="M0.5 2.5q0-2 2-2h4l1.5 2h5q2 0 2 2v7q0 2-2 2h-10.5q-2 0-2-2z" fill="#e6f0fa" stroke="#5a7fae"/><path d="M1 4.5h13" stroke="#a9c3e0"/></svg>
<span class="t" style="left:1541px;top:249.0px;font-size:15px;line-height:19px;letter-spacing:0.027px;">components</span>
<svg class="a" style="left:1527px;top:277px;" width="6" height="9" viewBox="0 0 6 9"><path d="M0.5 0.8l4 3.7-4 3.7z" fill="#fff" stroke="#989898"/></svg>
<svg class="a" style="left:1540px;top:275px;" width="13" height="10" viewBox="0 0 13 10"><rect x="1.5" y="0.5" width="9" height="8" fill="url(#chk)" stroke="#333"/><rect x="0" y="2" width="3" height="3" fill="#111"/></svg>
<div class="a" style="left:1560px;top:271px;width:119px;height:22px;overflow:hidden;"><span class="t" style="left:0;top:1.500px;line-height:19px;letter-spacing:-0.22265625px;">HeatControl_EmulatedTemp</span></div>
<svg class="a" style="left:1527px;top:300px;" width="6" height="9" viewBox="0 0 6 9"><path d="M0.5 0.8l4 3.7-4 3.7z" fill="#fff" stroke="#989898"/></svg>
<svg class="a" style="left:1540px;top:298px;" width="13" height="10" viewBox="0 0 13 10"><rect x="1.5" y="0.5" width="9" height="8" fill="url(#chk)" stroke="#333"/><rect x="0" y="2" width="3" height="3" fill="#111"/></svg>
<div class="a" style="left:1560px;top:294px;width:119px;height:22px;overflow:hidden;"><span class="t" style="left:0;top:1.500px;line-height:19px;letter-spacing:-0.171875px;">HeatControl_SeatHeaterAd</span></div>
<svg class="a" style="left:1527px;top:323px;" width="6" height="9" viewBox="0 0 6 9"><path d="M0.5 0.8l4 3.7-4 3.7z" fill="#fff" stroke="#989898"/></svg>
<svg class="a" style="left:1541px;top:318px;" width="12" height="16" viewBox="0 0 12 16"><rect x="1.5" y="3.5" width="8" height="9" fill="url(#chk)" stroke="#333"/><path d="M2.5 0v3M5.5 0v3M8.5 0v3" stroke="#333" stroke-dasharray="1 1"/><path d="M2.5 13v2M8.5 13v2" stroke="#333"/><path d="M1 14.5h3M7 14.5h3" stroke="#333"/></svg>
<div class="a" style="left:1560px;top:317px;width:119px;height:22px;overflow:hidden;"><span class="t" style="left:0;top:1.500px;line-height:19px;letter-spacing:-0.3271484375px;">HeatControl_EcuAbstraction</span></div>
<svg class="a" style="left:1527px;top:346px;" width="6" height="9" viewBox="0 0 6 9"><path d="M0.5 0.8l4 3.7-4 3.7z" fill="#fff" stroke="#989898"/></svg>
<svg class="a" style="left:1538px;top:345px;" width="17" height="10" viewBox="0 0 17 10"><rect x="3.5" y="0.5" width="9" height="8" fill="url(#chk)" stroke="#333"/><path d="M0 1.5h3M0 4.5h3M0 7.5h3" stroke="#333" stroke-dasharray="1 1"/><path d="M13 1.5h2M13 7.5h2" stroke="#333"/><path d="M14.5 0v3l2-1.5zM14.5 6v3l2-1.5z" fill="#222"/></svg>
<div class="a" style="left:1560px;top:340px;width:119px;height:22px;overflow:hidden;"><span class="t" style="left:0;top:1.500px;line-height:19px;letter-spacing:-0.00390625px;">HeatControl_ActrOfHeatg</span></div>
<svg class="a" style="left:1527px;top:369px;" width="6" height="9" viewBox="0 0 6 9"><path d="M0.5 0.8l4 3.7-4 3.7z" fill="#fff" stroke="#989898"/></svg>
<svg class="a" style="left:1538px;top:368px;" width="17" height="10" viewBox="0 0 17 10"><rect x="3.5" y="0.5" width="9" height="8" fill="url(#chk)" stroke="#333"/><path d="M0 1.5h3M0 4.5h3M0 7.5h3" stroke="#333" stroke-dasharray="1 1"/><path d="M13 1.5h2M13 7.5h2" stroke="#333"/><path d="M14.5 0v3l2-1.5zM14.5 6v3l2-1.5z" fill="#222"/></svg>
<div class="a" style="left:1560px;top:363px;width:119px;height:22px;overflow:hidden;"><span class="t" style="left:0;top:1.500px;line-height:19px;letter-spacing:-0.41015625px;">HeatControl_SnrColdBreeze</span></div>
<svg class="a" style="left:1527px;top:392px;" width="6" height="9" viewBox="0 0 6 9"><path d="M0.5 0.8l4 3.7-4 3.7z" fill="#fff" stroke="#989898"/></svg>
<svg class="a" style="left:1540px;top:390px;" width="13" height="10" viewBox="0 0 13 10"><rect x="1.5" y="0.5" width="9" height="8" fill="url(#chk)" stroke="#333"/><rect x="0" y="2" width="3" height="3" fill="#111"/></svg>
<span class="t" style="left:1560px;top:387.0px;font-size:15px;line-height:19px;letter-spacing:-0.300px;">BswM/ BswM</span>
<svg class="a" style="left:1527px;top:415px;" width="6" height="9" viewBox="0 0 6 9"><path d="M0.5 0.8l4 3.7-4 3.7z" fill="#fff" stroke="#989898"/></svg>
<svg class="a" style="left:1540px;top:413px;" width="13" height="10" viewBox="0 0 13 10"><rect x="1.5" y="0.5" width="9" height="8" fill="url(#chk)" stroke="#333"/><rect x="0" y="2" width="3" height="3" fill="#111"/></svg>
<span class="t" style="left:1560px;top:410.0px;font-size:15px;line-height:19px;letter-spacing:0.031px;">ComM/ ComM</span>
<svg class="a" style="left:1527px;top:438px;" width="6" height="9" viewBox="0 0 6 9"><path d="M0.5 0.8l4 3.7-4 3.7z" fill="#fff" stroke="#989898"/></svg>
<svg class="a" style="left:1540px;top:436px;" width="13" height="10" viewBox="0 0 13 10"><rect x="1.5" y="0.5" width="9" height="8" fill="url(#chk)" stroke="#333"/><rect x="0" y="2" width="3" height="3" fill="#111"/></svg>
<span class="t" style="left:1560px;top:433.0px;font-size:15px;line-height:19px;letter-spacing:-0.403px;">EcuM/ EcuM</span>
<svg class="a" style="left:1507px;top:462px;" width="8" height="8" viewBox="0 0 8 8"><path d="M7 1v6H1z" fill="#404040"/></svg>
<svg class="a" style="left:1522px;top:458px;" width="16" height="14" viewBox="0 0 16 14"><path d="M0.5 2.5q0-2 2-2h4l1.5 2h5q2 0 2 2v7q0 2-2 2h-10.5q-2 0-2-2z" fill="#e6f0fa" stroke="#5a7fae"/><path d="M1 4.5h13" stroke="#a9c3e0"/></svg>
<span class="t" style="left:1541px;top:456.0px;font-size:15px;line-height:19px;letter-spacing:0.128px;">ports</span>
<svg class="a" style="left:1527px;top:484px;" width="6" height="9" viewBox="0 0 6 9"><path d="M0.5 0.8l4 3.7-4 3.7z" fill="#fff" stroke="#989898"/></svg>
<svg class="a" style="left:1539px;top:480px;" width="15" height="15" viewBox="0 0 15 15"><rect x="0.75" y="0.75" width="13" height="13" fill="#fff" stroke="#000" stroke-width="1.5"/><path d="M10.5 2.5v9.500l-6.500-4.750z" fill="#000"/></svg>
<div class="a" style="left:1560px;top:478px;width:119px;height:22px;overflow:hidden;"><span class="t" style="left:0;top:1.500px;line-height:19px;letter-spacing:-0.07291666666666667px;">SeatTemperatureToHMI</span></div>
<svg class="a" style="left:1527px;top:507px;" width="6" height="9" viewBox="0 0 6 9"><path d="M0.5 0.8l4 3.7-4 3.7z" fill="#fff" stroke="#989898"/></svg>
<svg class="a" style="left:1539px;top:503px;" width="15" height="15" viewBox="0 0 15 15"><rect x="0.75" y="0.75" width="13" height="13" fill="#fff" stroke="#000" stroke-width="1.5"/><path d="M4.5 2.5v9.500l6.500-4.750z" fill="#000"/></svg>
<div class="a" style="left:1560px;top:501px;width:119px;height:22px;overflow:hidden;"><span class="t" style="left:0;top:1.500px;line-height:19px;letter-spacing:-0.003605769230769231px;">HeatModeFromHMI</span></div>
<svg class="a" style="left:1475px;top:743px;" width="145" height="25" viewBox="0 0 145 25"><defs><linearGradient id="gw" x1="0" y1="0" x2="0" y2="1"><stop offset="0" stop-color="#ffffff"/><stop offset="1" stop-color="#ececec"/></linearGradient></defs><path d="M0 24 L0 10 Q0 0 10 0 L103 0 Q110 0.500 115 6 L129 18.5 Q133 23 140 23.5 L143 24 Z" fill="url(#gw)"/><path d="M0 24 L0 10 Q0 0 10 0 L103 0 Q110 0.500 115 6 L129 18.5 Q133 23 140 23.5" fill="none" stroke="#a8a8a8" stroke-width="1"/></svg>
<svg class="a" style="left:1479px;top:747px;" width="15" height="13" viewBox="0 0 15 13"><rect x="0.500" y="0.500" width="14" height="12" fill="#fff" stroke="#555"/><rect x="1" y="1" width="13" height="2.500" fill="#c8d4ec"/><path d="M1 6.500h13M1 9.500h13M5.500 3.500v9" stroke="#8a9ac0"/></svg>
<span class="t" style="left:1498px;top:745.0px;font-size:15px;line-height:19px;letter-spacing:-0.138px;">Properties</span>
<svg class="a" style="left:1573px;top:749px;" width="10" height="10" viewBox="0 0 10 10"><path d="M0.5 0.5h2.500l2 2 2-2h2.500v2.500l-2 2 2 2v2.500h-2.500l-2-2-2 2h-2.500v-2.500l2-2-2-2z" fill="#fff" stroke="#7a7a7a" stroke-width="1"/></svg>
<svg class="a" style="left:1609px;top:746px;" width="16" height="16" viewBox="0 0 16 16"><rect x="0.500" y="0.500" width="15" height="15" fill="#fff" stroke="#333"/><rect x="1" y="1" width="14" height="3" fill="#c8c8c8"/><path d="M2.500 6.500h11M2.500 9.500h11M2.500 12.500h11" stroke="#e8b030" stroke-dasharray="1.500 1.500"/><path d="M5.500 4v11M10.500 4v11" stroke="#aac"/></svg>
<span class="t" style="left:1629px;top:745.0px;font-size:15px;line-height:19px;letter-spacing:0.018px;">Diagram Explorer</span>
<svg class="a" style="left:1742px;top:743px;" width="10" height="25" viewBox="0 0 10 25"><path d="M0 0.500Q7.500 0.500 7.500 8L7.500 24" fill="none" stroke="#b8b8b8"/></svg>
<svg class="a" style="left:1676px;top:771px;" width="15" height="16" viewBox="0 0 15 16"><rect x="0.500" y="5.500" width="11" height="10" fill="#fff" stroke="#8a8ab0"/><rect x="1" y="6" width="10" height="2.500" fill="#3a6ad0"/><path d="M6 10l7-7" stroke="#2a9a3a" stroke-width="3"/><path d="M5 11l2-.5-1.500-1.500z" fill="#333"/></svg>
<div class="a" style="left:1696px;top:769px;width:23px;height:20px;border:1px solid #6f6f6f;border-radius:3px;background:#dcdcdc;box-shadow:inset 1px 1px 1px #bbb;"></div>
<svg class="a" style="left:1702px;top:773px;" width="11" height="12" viewBox="0 0 11 12"><path d="M1.500 0v10.500h3M1.500 2.500h3M1.500 6.500h3" fill="none" stroke="#2a4a9a" stroke-width="1.300"/><rect x="5" y="1" width="5" height="3" fill="#fff" stroke="#2a4a9a"/><rect x="5" y="5" width="5" height="3" fill="#fff" stroke="#2a4a9a"/><rect x="5" y="9" width="5" height="3" fill="#fff" stroke="#2a4a9a"/></svg>
<svg class="a" style="left:1723px;top:771px;" width="16" height="16" viewBox="0 0 16 16"><path d="M1 3.500h9M1 12.500h9M3.500 0v7M3.500 9v7" stroke="#333" stroke-width="1.200"/><path d="M7 8h6" stroke="#e8a020" stroke-width="2"/><path d="M11 4.500l4.500 3.500-4.500 3.500z" fill="#f0b830" stroke="#b87a10" stroke-width=".8"/></svg>
<svg class="a" style="left:1745px;top:771px;" width="16" height="16" viewBox="0 0 16 16"><rect x="0.500" y="1.500" width="11" height="10" fill="#fff" stroke="#666"/><rect x="1" y="2" width="10" height="2.500" fill="#8a8a8a"/><path d="M2 6.500h8M2 8.500h8" stroke="#aaa"/><path d="M8 10q4-2 6 1l1.500-1-.5 4.500-4.500-.5 1.500-1q-1.500-2-4-1z" fill="#f0b830" stroke="#b87a10" stroke-width=".7"/></svg>
<svg class="a" style="left:1768px;top:770px;" width="16" height="17" viewBox="0 0 16 17"><path d="M2 2l11 12" stroke="#8a8a8a" stroke-width="2.200"/><path d="M13 1.500l-3 3 1.500 1.500 3-3" fill="none" stroke="#999" stroke-width="1.300"/><path d="M12 4l-6 6" stroke="#aaa" stroke-width="1.600"/><path d="M7 9.500l5 5.500" stroke="#5aa92a" stroke-width="4" stroke-linecap="round"/><path d="M2 14.500l3-3" stroke="#666" stroke-width="1.500"/></svg>
<svg class="a" style="left:1791px;top:771px;" width="16" height="16" viewBox="0 0 16 16"><circle cx="8" cy="8" r="7" fill="#fff" stroke="#2a62b8" stroke-width="1.5"/><text x="8" y="12" font-size="11" font-weight="bold" font-family="Liberation Sans" text-anchor="middle" fill="#2a62b8">?</text></svg>
<svg class="a" style="left:1822px;top:774px;" width="11" height="6" viewBox="0 0 11 6"><path d="M0.800 0.500h9.400l-4.700 4.700z" fill="#fff" stroke="#6a6a6a"/></svg>
<div class="a " style="left:1477px;top:790px;width:340px;height:380px;background:#fff;"></div>
<span class="t" style="left:1483px;top:799.5px;font-size:21px;line-height:25px;letter-spacing:-0.836px;font-weight:bold;color:#1b4b86;">CompositionSwComponentType</span>
<div class="a" style="left:1487px;top:840px;width:319px;height:27px;border:1px solid #c8d4e8;border-bottom:none;border-radius:4px 4px 0 0;background:linear-gradient(#e1e9f6,#edf2fa 45%,#fff);"></div>
<svg class="a" style="left:1495px;top:851px;" width="8" height="5" viewBox="0 0 8 5"><path d="M0 0h8l-4 4.500z" fill="#1a4880"/></svg>
<span class="t" style="left:1508px;top:843.5px;font-size:15px;line-height:19px;letter-spacing:-0.122px;font-weight:bold;color:#1b4b86;">Referrable</span>
<svg class="a" style="left:1784px;top:846px;" width="12" height="12" viewBox="0 0 12 12"><rect x="0.500" y="0.500" width="11" height="11" fill="#fff" stroke="#355f9a"/><path d="M3 3l6 6M9 3l-6 6" stroke="#355f9a" stroke-width="1.200"/></svg>
<span class="t" style="left:1495px;top:874.0px;font-size:15px;line-height:19px;letter-spacing:0.199px;">path</span>
<div class="a " style="left:1575px;top:874px;width:223px;height:25px;background:#efefef;border:1px solid #d0d0d0;border-radius:2px;"></div>
<span class="t" style="left:1581px;top:877.0px;font-size:15px;line-height:19px;letter-spacing:-0.191px;">/swc/ECUFlatView</span>
<span class="t" style="left:1494px;top:910.0px;font-size:15px;line-height:19px;letter-spacing:-0.042px;">shortName</span>
<div class="a " style="left:1574px;top:907px;width:157px;height:24px;background:#efefef;border:1px solid #9a9a9a;"></div>
<span class="t" style="left:1579px;top:910.0px;font-size:15px;line-height:19px;letter-spacing:-0.536px;">ECUFlatView</span>
<div class="a" style="left:1733px;top:908px;width:64px;height:23px;border:1px solid #707070;border-radius:3px;background:linear-gradient(#f2f2f2,#ebebeb 48%,#dddddd 52%,#cfcfcf);box-shadow:inset 0 0 0 1px #fcfcfc;"></div>
<span class="t" style="left:1738.0px;top:910.5px;font-size:15px;line-height:19px;letter-spacing:-0.451px;">Rename</span>
<div class="a" style="left:1487px;top:940px;width:319px;height:27px;border:1px solid #c8d4e8;border-bottom:none;border-radius:4px 4px 0 0;background:linear-gradient(#e1e9f6,#edf2fa 45%,#fff);"></div>
<svg class="a" style="left:1495px;top:951px;" width="8" height="5" viewBox="0 0 8 5"><path d="M0 0h8l-4 4.500z" fill="#1a4880"/></svg>
<span class="t" style="left:1508px;top:943.5px;font-size:15px;line-height:19px;letter-spacing:0.068px;font-weight:bold;color:#1b4b86;">Identifiable</span>
<svg class="a" style="left:1784px;top:946px;" width="12" height="12" viewBox="0 0 12 12"><rect x="0.500" y="0.500" width="11" height="11" fill="#fff" stroke="#355f9a"/><path d="M3 3l6 6M9 3l-6 6" stroke="#355f9a" stroke-width="1.200"/></svg>
<span class="t" style="left:1495px;top:974.0px;font-size:15px;line-height:19px;letter-spacing:0.057px;">category</span>
<div class="a " style="left:1559px;top:971px;width:240px;height:24px;background:#fff;border:1px solid #9a9aa4;"></div>
<div class="a" style="left:1487px;top:1002px;width:319px;height:27px;border:1px solid #c8d4e8;border-bottom:none;border-radius:4px 4px 0 0;background:linear-gradient(#e1e9f6,#edf2fa 45%,#fff);"></div>
<svg class="a" style="left:1495px;top:1013px;" width="8" height="5" viewBox="0 0 8 5"><path d="M0 0h8l-4 4.500z" fill="#1a4880"/></svg>
<span class="t" style="left:1508px;top:1005.5px;font-size:15px;line-height:19px;letter-spacing:-0.191px;font-weight:bold;color:#1b4b86;">SwComponentType</span>
<svg class="a" style="left:1784px;top:1008px;" width="12" height="12" viewBox="0 0 12 12"><rect x="0.500" y="0.500" width="11" height="11" fill="#fff" stroke="#355f9a"/><path d="M3 3l6 6M9 3l-6 6" stroke="#355f9a" stroke-width="1.200"/></svg>
<span class="t" style="left:1495px;top:1036.0px;font-size:15px;line-height:19px;letter-spacing:-0.233px;">unitGroups:</span>
<div class="a " style="left:1495px;top:1058px;width:303px;height:112px;background:#fff;border:1px solid #9a9aa4;border-bottom:none;"></div>
<div class="a" style="left:1496px;top:1059px;width:301px;height:25px;background:linear-gradient(#fff,#fff 40%,#f4f5f6 42%,#f2f3f4);border-bottom:1px solid #d5d5d5;"></div>
<div class="a" style="left:1645px;top:1059px;width:1px;height:25px;background:#dedfe0;"></div>
<div class="a" style="left:1797px;top:1059px;width:1px;height:25px;background:#dedfe0;"></div>
<span class="t" style="left:1502px;top:1062.5px;font-size:15px;line-height:19px;letter-spacing:0.107px;">Object</span>
<span class="t" style="left:1652px;top:1062.5px;font-size:15px;line-height:19px;letter-spacing:0.050px;">Short-Name path</span>
<div class="a " style="left:1817px;top:790px;width:19px;height:380px;background:#f0f0f0;"></div>
<svg class="a" style="left:1822px;top:797px;" width="9" height="6" viewBox="0 0 9 6"><path d="M0 6h9l-4.500-6z" fill="#404040"/></svg>
<svg class="a" style="left:1822px;top:1157px;" width="9" height="6" viewBox="0 0 9 6"><path d="M0 0h9l-4.500 6z" fill="#404040"/></svg>
<div class="a" style="left:1818px;top:812px;width:17px;height:116px;border:1px solid #979797;border-radius:2px;background:linear-gradient(90deg,#f0f0f0,#e3e3e3 45%,#cfcfcf 50%,#d9d9d9);"></div>
<div class="a " style="left:1822px;top:866px;width:9px;height:1px;background:#4d4d4d;"></div>
<div class="a " style="left:1822px;top:869px;width:9px;height:1px;background:#4d4d4d;"></div>
<div class="a " style="left:1822px;top:872px;width:9px;height:1px;background:#4d4d4d;"></div>
<div class="a " style="left:1px;top:62px;width:2px;height:2px;background:#a8a090;"></div>
<div class="a " style="left:1px;top:66px;width:2px;height:2px;background:#a8a090;"></div>
<div class="a " style="left:1px;top:70px;width:2px;height:2px;background:#a8a090;"></div>
<div class="a " style="left:1px;top:74px;width:2px;height:2px;background:#a8a090;"></div>
<div class="a " style="left:1px;top:78px;width:2px;height:2px;background:#a8a090;"></div>
<svg class="a" style="left:10px;top:62px;" width="16" height="16" viewBox="0 0 16 16"><rect x="0.500" y="3.500" width="13" height="12" fill="#fff" stroke="#4a6a9a"/><rect x="1" y="4" width="12" height="2.500" fill="#3a6ad0"/><path d="M12.500 0l1 2.500 2.500 1-2.500 1-1 2.500-1-2.500-2.500-1 2.500-1z" fill="#f8e060" stroke="#c8a020" stroke-width=".7"/></svg>
<svg class="a" style="left:33px;top:68px;" width="9" height="5" viewBox="0 0 9 5"><path d="M0 0h9l-4.500 5z" fill="#000"/></svg>
<svg class="a" style="left:51px;top:62px;" width="16" height="16" viewBox="0 0 16 16"><path d="M0.500 0.500h13l2 2v13h-15z" fill="#e4e4e4" stroke="#b8b8b8"/><rect x="3.500" y="0.500" width="8" height="5" fill="#f4f4f4" stroke="#b8b8b8"/><rect x="3" y="9" width="10" height="6.500" fill="#f0f0f0" stroke="#b8b8b8"/><rect x="5" y="10.500" width="2.500" height="4" fill="#b8b8b8"/></svg>
<svg class="a" style="left:74px;top:62px;" width="16" height="16" viewBox="0 0 16 16"><path d="M0.500 0.500h9l2 2v9h-11z" fill="#e8e8e8" stroke="#b8b8b8"/><path d="M4.500 4.500h9l2 2v9h-11z" fill="#e4e4e4" stroke="#b8b8b8"/><rect x="7" y="10" width="6" height="5.500" fill="#f0f0f0" stroke="#b8b8b8"/><rect x="7" y="4.500" width="5" height="3" fill="#f4f4f4" stroke="#b8b8b8"/></svg>
<svg class="a" style="left:98px;top:63px;" width="14" height="13" viewBox="0 0 14 13"><path d="M3 6.500q1-4 5-3.500 3.500.5 3.500 4-.5 3.500-4 3.500h-2" fill="none" stroke="#a8a8a8" stroke-width="2"/><path d="M0.500 4l5-1-1 5z" fill="#a8a8a8"/></svg>
<svg class="a" style="left:118px;top:62px;" width="17" height="16" viewBox="0 0 17 16"><rect x="3.500" y="0.500" width="9" height="6" fill="#f4f4f4" stroke="#b8b8b8"/><rect x="0.500" y="6.500" width="15" height="6" rx="1.500" fill="#e0e0e0" stroke="#b8b8b8"/><rect x="3.500" y="10.500" width="9" height="4.500" fill="#f4f4f4" stroke="#b8b8b8"/><path d="M5 3h6" stroke="#b8b8b8"/></svg>
<div class="a " style="left:141px;top:61px;width:1px;height:19px;background:#8a8a8a;"></div>
<svg class="a" style="left:152px;top:62px;" width="14" height="16" viewBox="0 0 14 16"><path d="M0.500 0.500h8.500l4 4v11h-12.500z" fill="#fff" stroke="#8a9ac0"/><path d="M2.500 4.500h5M2.500 6.500h8" stroke="#e8b860"/><text x="1" y="14.500" font-size="7.500" font-family="Liberation Sans" font-weight="bold" fill="#2a3a8a">010</text></svg>
<div class="a " style="left:172px;top:62px;width:2px;height:2px;background:#a8a090;"></div>
<div class="a " style="left:172px;top:66px;width:2px;height:2px;background:#a8a090;"></div>
<div class="a " style="left:172px;top:70px;width:2px;height:2px;background:#a8a090;"></div>
<div class="a " style="left:172px;top:74px;width:2px;height:2px;background:#a8a090;"></div>
<div class="a " style="left:172px;top:78px;width:2px;height:2px;background:#a8a090;"></div>
<svg class="a" style="left:179px;top:62px;" width="17" height="16" viewBox="0 0 17 16"><path d="M12.500 0.500q3.500 5.500-1 9.500-2.500 1.500-5.500 1.500v3.500l-5.500-5 5.500-5v3.500q3.500 0 5-2.500 1.500-2.500-.5-5.500z" fill="#fafafa" stroke="#b0b0b0"/></svg>
<svg class="a" style="left:200px;top:62px;" width="17" height="16" viewBox="0 0 17 16"><path d="M4.500 0.500q-3.500 5.500 1 9.500 2.500 1.500 5.500 1.500v3.500l5.500-5-5.500-5v3.500q-3.500 0-5-2.500-1.500-2.500.5-5.500z" fill="#fafafa" stroke="#b0b0b0"/></svg>
<div class="a " style="left:223px;top:62px;width:2px;height:2px;background:#a8a090;"></div>
<div class="a " style="left:223px;top:66px;width:2px;height:2px;background:#a8a090;"></div>
<div class="a " style="left:223px;top:70px;width:2px;height:2px;background:#a8a090;"></div>
<div class="a " style="left:223px;top:74px;width:2px;height:2px;background:#a8a090;"></div>
<div class="a " style="left:223px;top:78px;width:2px;height:2px;background:#a8a090;"></div>
<svg class="a" style="left:231px;top:62px;" width="16" height="16" viewBox="0 0 16 16"><path d="M0.500 1.500h8l3 3v10.500h-11z" fill="#fff" stroke="#222"/><path d="M3 8.500l3 4 7-11" fill="none" stroke="#1d8a1d" stroke-width="2.200"/></svg>
<svg class="a" style="left:254px;top:68px;" width="9" height="5" viewBox="0 0 9 5"><path d="M0 0h9l-4.500 5z" fill="#000"/></svg>
<div class="a " style="left:270px;top:62px;width:2px;height:2px;background:#a8a090;"></div>
<div class="a " style="left:270px;top:66px;width:2px;height:2px;background:#a8a090;"></div>
<div class="a " style="left:270px;top:70px;width:2px;height:2px;background:#a8a090;"></div>
<div class="a " style="left:270px;top:74px;width:2px;height:2px;background:#a8a090;"></div>
<div class="a " style="left:270px;top:78px;width:2px;height:2px;background:#a8a090;"></div>
<svg class="a" style="left:276px;top:62px;" width="17" height="15" viewBox="0 0 17 15"><path d="M0.500 2.500q0-1 1-1h4l1.500 2h8v10h-14.500z" fill="#f8e8b0" stroke="#c8a040"/><path d="M4 6.500h7l-1.500-2M13 9.500h-7l1.500 2" fill="none" stroke="#e8b010" stroke-width="1.600"/></svg>
<svg class="a" style="left:299px;top:61px;" width="17" height="17" viewBox="0 0 17 17"><path d="M6 0.500l4 8h-8z" fill="#3aa040" stroke="#1a6a20"/><rect x="0.500" y="9.500" width="7" height="6" fill="#7a9ad0" stroke="#2a3a6a"/><circle cx="12" cy="12" r="3.800" fill="#f0e040" stroke="#8a7a10"/></svg>
<div class="a " style="left:321px;top:62px;width:2px;height:2px;background:#a8a090;"></div>
<div class="a " style="left:321px;top:66px;width:2px;height:2px;background:#a8a090;"></div>
<div class="a " style="left:321px;top:70px;width:2px;height:2px;background:#a8a090;"></div>
<div class="a " style="left:321px;top:74px;width:2px;height:2px;background:#a8a090;"></div>
<div class="a " style="left:321px;top:78px;width:2px;height:2px;background:#a8a090;"></div>
<svg class="a" style="left:328px;top:62px;" width="15" height="15" viewBox="0 0 15 15"><path d="M1 0v13.500h13.500" fill="none" stroke="#111" stroke-width="1.300"/><path d="M2.500 12l10-10" stroke="#2a4ab8" stroke-width="2.200"/><path d="M3 2.500v9h9" fill="none" stroke="#555" stroke-dasharray="1 2"/></svg>
<svg class="a" style="left:351px;top:62px;" width="16" height="16" viewBox="0 0 16 16"><rect x="0.500" y="0.500" width="15" height="6" fill="#2a8af0" stroke="#1a4a9a"/><rect x="0.500" y="8.500" width="7" height="7" fill="#f08a3a" stroke="#a04a10"/><rect x="8.500" y="8.500" width="7" height="7" fill="#f08a3a" stroke="#a04a10"/></svg>
<svg class="a" style="left:373px;top:64px;" width="17" height="12" viewBox="0 0 17 12"><path d="M0 0.500l9 5.500-9 5.500zM5 0.500l11 5.500-11 5.500" fill="#000"/><path d="M7.500 3.200l5.500 2.800-5.500 2.800z" fill="#f0f0f0"/></svg>
<svg class="a" style="left:396px;top:65px;" width="17" height="10" viewBox="0 0 17 10"><rect x="3.5" y="0.5" width="9" height="8" fill="url(#chk)" stroke="#333"/><path d="M0 1.5h3M0 4.5h3M0 7.5h3" stroke="#333" stroke-dasharray="1 1"/><path d="M13 1.5h2M13 7.5h2" stroke="#333"/><path d="M14.5 0v3l2-1.5zM14.5 6v3l2-1.5z" fill="#222"/></svg>
<svg class="a" style="left:419px;top:62px;" width="16" height="16" viewBox="0 0 16 16"><rect x="2.500" y="0.500" width="12" height="14" rx="1.500" fill="#c0d4e8" stroke="#222" stroke-width="1.300"/><rect x="0.500" y="3.500" width="3" height="3" fill="#fff" stroke="#222"/><rect x="0.500" y="9" width="3" height="3" fill="#fff" stroke="#222"/><rect x="7" y="3" width="4" height="3" fill="#222"/><rect x="5.500" y="8.500" width="3" height="3" fill="#222"/><rect x="10" y="8.500" width="3" height="3" fill="#222"/></svg>
<svg class="a" style="left:443px;top:62px;" width="16" height="16" viewBox="0 0 16 16"><circle cx="6" cy="5.500" r="5" fill="#3aa060" stroke="#186a38"/><path d="M3 4h2l1 2h3M4 8l2-1" stroke="#bfe8c8" fill="none"/><circle cx="6.500" cy="11.500" r="3.500" fill="#fff" stroke="#2a5ab0" stroke-width="1.300"/><path d="M6.500 9.500v2h1.500" stroke="#2a5ab0" fill="none"/><path d="M11 7.500h5M11 10.500h5M11 13.500h5" stroke="#6a8ac8"/></svg>
<svg class="a" style="left:465px;top:65px;" width="17" height="10" viewBox="0 0 17 10"><rect x="3.500" y="1.500" width="10" height="7" fill="#234" stroke="#111"/><path d="M4 3.500h9M4 5.500h9" stroke="#68a" stroke-dasharray="1 1"/><path d="M0 2.500h3M0 5h3M0 7.500h3M14 2.500h3M14 7.500h3" stroke="#111" stroke-dasharray="1 1"/></svg>
<svg class="a" style="left:488px;top:61px;" width="18" height="18" viewBox="0 0 18 18"><circle cx="6.500" cy="6.500" r="4.500" fill="none" stroke="#111" stroke-width="2.800" stroke-dasharray="2 1.400"/><circle cx="6.500" cy="6.500" r="1.600" fill="#fff" stroke="#111"/><circle cx="11.500" cy="11.500" r="4.500" fill="#e8d820" stroke="#111" stroke-width="2.200" stroke-dasharray="2 1.400"/><circle cx="11.500" cy="11.500" r="1.400" fill="#fff"/></svg>
<svg class="a" style="left:513px;top:64px;" width="14" height="14" viewBox="0 0 14 14"><path d="M4 0.500h6l3.500 3.500v6l-3.500 3.500h-6l-3.500-3.500v-6z" fill="#eeea50" stroke="#a89820" stroke-width=".9"/><circle cx="5.500" cy="5" r="1.800" fill="#fafac8"/></svg>
<svg class="a" style="left:536px;top:62px;" width="13" height="15" viewBox="0 0 13 15"><rect x="1.500" y="6.500" width="9" height="6" fill="#f6f29a" stroke="#5a4a10"/><path d="M1 3.500h10M6 3.500v3" stroke="#3a3010" stroke-width="1.200"/><rect x="8" y="0.500" width="4" height="3" fill="#f4f060"/></svg>
<div class="a " style="left:557px;top:69px;width:16px;height:1px;background:#5a5010;"></div>
<div class="a " style="left:557px;top:70px;width:16px;height:1px;background:#e8d820;"></div>
<div class="a " style="left:579px;top:62px;width:2px;height:2px;background:#a8a090;"></div>
<div class="a " style="left:579px;top:66px;width:2px;height:2px;background:#a8a090;"></div>
<div class="a " style="left:579px;top:70px;width:2px;height:2px;background:#a8a090;"></div>
<div class="a " style="left:579px;top:74px;width:2px;height:2px;background:#a8a090;"></div>
<div class="a " style="left:579px;top:78px;width:2px;height:2px;background:#a8a090;"></div>
<svg class="a" style="left:588px;top:62px;" width="13" height="16" viewBox="0 0 13 16"><path d="M0.500 0.500h8l4 4v11h-12z" fill="#fff" stroke="#b8a070"/><path d="M2.500 4h5M2.500 6h7" stroke="#8ab"/><rect x="2.500" y="9" width="2" height="5" fill="#2a6ad0"/><rect x="5.500" y="11" width="2" height="3" fill="#e04020"/><rect x="8.500" y="8" width="2" height="6" fill="#2aa040"/></svg>
<svg class="a" style="left:610px;top:68px;" width="9" height="5" viewBox="0 0 9 5"><path d="M0 0h9l-4.500 5z" fill="#000"/></svg>
<div class="a " style="left:626px;top:62px;width:2px;height:2px;background:#a8a090;"></div>
<div class="a " style="left:626px;top:66px;width:2px;height:2px;background:#a8a090;"></div>
<div class="a " style="left:626px;top:70px;width:2px;height:2px;background:#a8a090;"></div>
<div class="a " style="left:626px;top:74px;width:2px;height:2px;background:#a8a090;"></div>
<div class="a " style="left:626px;top:78px;width:2px;height:2px;background:#a8a090;"></div>
<div class="a" style="left:630px;top:60px;width:27px;height:24px;border:1px solid #8a8a8a;border-radius:3px;background:#e0e0e0;box-shadow:inset 1px 1px 1px #c4c4c4;"></div>
<svg class="a" style="left:635px;top:63px;" width="17" height="15" viewBox="0 0 17 15"><path d="M0.500 3.500q0-1 1-1h3l1-1.500h2.500l1 1.500h6v11h-14.500z" fill="#f5dc9a" stroke="#c8993c"/><circle cx="9" cy="8.500" r="5.500" fill="#d62c2c"/><path d="M5 12.300a5.500 5.500 0 0 0 9.400-5.300z" fill="#2b4f9e"/><circle cx="7.300" cy="6.500" r="1.600" fill="#f6b0b0"/></svg>
<div class="a" style="left:662px;top:59px;width:205px;height:24px;border:1px solid #abadb3;background:#fff;"></div>
<div class="a" style="left:845px;top:61px;width:20px;height:20px;border:1px solid #e8e8e8;background:linear-gradient(#f4f4f4,#e6e6e6);"></div>
<svg class="a" style="left:850px;top:69px;" width="9" height="5"><defs><linearGradient id="dg87" x1="0" y1="0" x2="0" y2="1"><stop offset="0" stop-color="#222"/><stop offset="1" stop-color="#999"/></linearGradient></defs><path d="M0 0h9l-4.500 5z" fill="url(#dg87)"/></svg>
<div class="a " style="left:666px;top:61px;width:8px;height:16px;background:#f2c12e;"></div>
<svg class="a" style="left:668px;top:62px;" width="13" height="13" viewBox="0 0 13 13"><circle cx="6.500" cy="6.500" r="5.500" fill="#f0ee58" stroke="#4a4a20"/><circle cx="5" cy="5" r="2" fill="#fbfbc0"/></svg>
<span class="t" style="left:685px;top:62.0px;font-size:15px;line-height:19px;letter-spacing:-0.307px;">system/SeatHeater_Dua</span>
<div class="a" style="left:872px;top:60px;width:25px;height:22px;border:1px solid #6f6f6f;border-radius:3px;background:#dcdcdc;box-shadow:inset 1px 1px 1px #bbb;"></div>
<svg class="a" style="left:877px;top:63px;" width="16" height="16" viewBox="0 0 16 16"><rect x="2.500" y="0.500" width="12" height="14" rx="1.500" fill="#a8c8e8" stroke="#222" stroke-width="1.300"/><rect x="0.500" y="3.500" width="3" height="3" fill="#fff" stroke="#222"/><rect x="0.500" y="9" width="3" height="3" fill="#fff" stroke="#222"/><rect x="7" y="3" width="4" height="3" fill="#222"/><rect x="5.500" y="8.500" width="3" height="3" fill="#222"/><rect x="10" y="8.500" width="3" height="3" fill="#222"/></svg>
<div class="a " style="left:628px;top:81px;width:272px;height:4px;background:#f0f0f0;"></div>
<div class="a " style="left:901px;top:62px;width:2px;height:2px;background:#a8a090;"></div>
<div class="a " style="left:901px;top:66px;width:2px;height:2px;background:#a8a090;"></div>
<div class="a " style="left:901px;top:70px;width:2px;height:2px;background:#a8a090;"></div>
<div class="a " style="left:901px;top:74px;width:2px;height:2px;background:#a8a090;"></div>
<div class="a " style="left:901px;top:78px;width:2px;height:2px;background:#a8a090;"></div>
<svg class="a" style="left:908px;top:61px;" width="17" height="17" viewBox="0 0 17 17"><circle cx="6" cy="6" r="5.500" fill="#2aa040" stroke="#1a6a28"/><path d="M4 3l5 3-5 3z" fill="#fff"/><rect x="8.500" y="10.500" width="8" height="5.500" rx="1" fill="#e02020" stroke="#900"/><path d="M10.500 10.500v-1.500h4v1.500" fill="none" stroke="#900"/><path d="M8.500 13h8" stroke="#fff" stroke-width=".8"/></svg>
<svg class="a" style="left:933px;top:68px;" width="9" height="5" viewBox="0 0 9 5"><path d="M0 0h9l-4.500 5z" fill="#000"/></svg>
<div class="a " style="left:948px;top:62px;width:2px;height:2px;background:#a8a090;"></div>
<div class="a " style="left:948px;top:66px;width:2px;height:2px;background:#a8a090;"></div>
<div class="a " style="left:948px;top:70px;width:2px;height:2px;background:#a8a090;"></div>
<div class="a " style="left:948px;top:74px;width:2px;height:2px;background:#a8a090;"></div>
<div class="a " style="left:948px;top:78px;width:2px;height:2px;background:#a8a090;"></div>
<svg class="a" style="left:955px;top:62px;" width="17" height="16" viewBox="0 0 17 16"><path d="M12 0.500l4 3.500-7 8-4-3.500z" fill="#f0c060" stroke="#b07a20"/><path d="M5 8.500l4 3.500-3.500 3.500q-3 1-4.500-.5t0-3.500z" fill="#9a9a9a" stroke="#666"/><path d="M1 15l2.500-2.500" stroke="#f8f0a0" stroke-width="2"/></svg>
<svg class="a" style="left:979px;top:68px;" width="9" height="5" viewBox="0 0 9 5"><path d="M0 0h9l-4.500 5z" fill="#000"/></svg>
<div class="a " style="left:995px;top:62px;width:2px;height:2px;background:#a8a090;"></div>
<div class="a " style="left:995px;top:66px;width:2px;height:2px;background:#a8a090;"></div>
<div class="a " style="left:995px;top:70px;width:2px;height:2px;background:#a8a090;"></div>
<div class="a " style="left:995px;top:74px;width:2px;height:2px;background:#a8a090;"></div>
<div class="a " style="left:995px;top:78px;width:2px;height:2px;background:#a8a090;"></div>
<svg class="a" style="left:1002px;top:61px;" width="15" height="17" viewBox="0 0 15 17"><rect x="3.500" y="5.500" width="11" height="11" fill="#f4f4f4" stroke="#c0c0c0"/><path d="M6 9h6M6 12h6M6 14.500h6" stroke="#d0d0d0"/><path d="M3 0.500h3v6h2.500l-4 4.500-4-4.500h2.500z" fill="#e4e4e4" stroke="#b0b0b0"/></svg>
<svg class="a" style="left:1026px;top:68px;" width="9" height="5" viewBox="0 0 9 5"><path d="M0 0h9l-4.500 5z" fill="#888"/></svg>
<svg class="a" style="left:1044px;top:61px;" width="15" height="17" viewBox="0 0 15 17"><rect x="3.500" y="0.500" width="11" height="11" fill="#f4f4f4" stroke="#c0c0c0"/><path d="M6 3h6M6 6h6M6 8.500h6" stroke="#d0d0d0"/><path d="M3 16.500h3v-6h2.500l-4-4.500-4 4.500h2.500z" fill="#e4e4e4" stroke="#b0b0b0"/></svg>
<svg class="a" style="left:1068px;top:68px;" width="9" height="5" viewBox="0 0 9 5"><path d="M0 0h9l-4.500 5z" fill="#888"/></svg>
<svg class="a" style="left:1085px;top:63px;" width="17" height="13" viewBox="0 0 17 13"><path d="M6.500 0.500v3.500h9.500v5h-9.500v3.500l-6-6z" fill="#e4e4e4" stroke="#b0b0b0"/><path d="M1 1l3 3M4 1l-3 3M2.500 0v5" stroke="#9a9ab0" stroke-width=".8"/></svg>
<svg class="a" style="left:1110px;top:63px;" width="16" height="13" viewBox="0 0 16 13"><path d="M6.500 0.500v3.500h8.500v5h-8.500v3.500l-6-6z" fill="#f8e080" stroke="#c08a10" stroke-width="1.200"/></svg>
<svg class="a" style="left:1133px;top:68px;" width="9" height="5" viewBox="0 0 9 5"><path d="M0 0h9l-4.500 5z" fill="#000"/></svg>
<svg class="a" style="left:1152px;top:63px;" width="16" height="13" viewBox="0 0 16 13"><path d="M9.500 0.500v3.500h-8.500v5h8.500v3.500l6-6z" fill="#f4f4f4" stroke="#b0b0b0" stroke-width="1.200"/></svg>
<svg class="a" style="left:1175px;top:68px;" width="9" height="5" viewBox="0 0 9 5"><path d="M0 0h9l-4.500 5z" fill="#888"/></svg>
<div class="a " style="left:1744px;top:62px;width:2px;height:2px;background:#a8a090;"></div>
<div class="a " style="left:1744px;top:66px;width:2px;height:2px;background:#a8a090;"></div>
<div class="a " style="left:1744px;top:70px;width:2px;height:2px;background:#a8a090;"></div>
<div class="a " style="left:1744px;top:74px;width:2px;height:2px;background:#a8a090;"></div>
<div class="a " style="left:1744px;top:78px;width:2px;height:2px;background:#a8a090;"></div>
<svg class="a" style="left:1759px;top:62px;" width="16" height="16" viewBox="0 0 16 16"><rect x="0.500" y="3.500" width="12" height="12" fill="#fff" stroke="#8a9a6a"/><rect x="1" y="4" width="11" height="2.500" fill="#6a9ad8"/><path d="M1 10.500h11M5.500 6.500v9" stroke="#c8b870"/><path d="M12.500 0l1 2.500 2.500 1-2.500 1-1 2.500-1-2.500-2.500-1 2.500-1z" fill="#f8e060" stroke="#c8a020" stroke-width=".7"/></svg>
<div class="a " style="left:1781px;top:61px;width:1px;height:19px;background:#9a9a9a;"></div>
<svg class="a" style="left:1790px;top:62px;" width="17" height="17" viewBox="0 0 17 17"><path d="M2 1.500h12M8 1.500v5" stroke="#111" stroke-width="1.400"/><rect x="1.500" y="6.500" width="8" height="6" fill="#3a4ae0" stroke="#1a1a80"/><circle cx="11.500" cy="11.500" r="3.800" fill="#f0a020" stroke="#a05a10" stroke-dasharray="1.500 1"/><circle cx="11.500" cy="11.500" r="1.300" fill="#fff"/></svg>
<div class="a" style="left:1810px;top:60px;width:25px;height:22px;border:1px solid #6f6f6f;border-radius:3px;background:#dcdcdc;box-shadow:inset 1px 1px 1px #bbb;"></div>
<svg class="a" style="left:1815px;top:63px;" width="16" height="16" viewBox="0 0 16 16"><rect x="2.500" y="0.500" width="12" height="14" rx="1.500" fill="#a8c8e8" stroke="#222" stroke-width="1.300"/><rect x="0.500" y="3.500" width="3" height="3" fill="#fff" stroke="#222"/><rect x="0.500" y="9" width="3" height="3" fill="#fff" stroke="#222"/><rect x="7" y="3" width="4" height="3" fill="#222"/><rect x="5.500" y="8.500" width="3" height="3" fill="#222"/><rect x="10" y="8.500" width="3" height="3" fill="#222"/></svg>
</body></html>
